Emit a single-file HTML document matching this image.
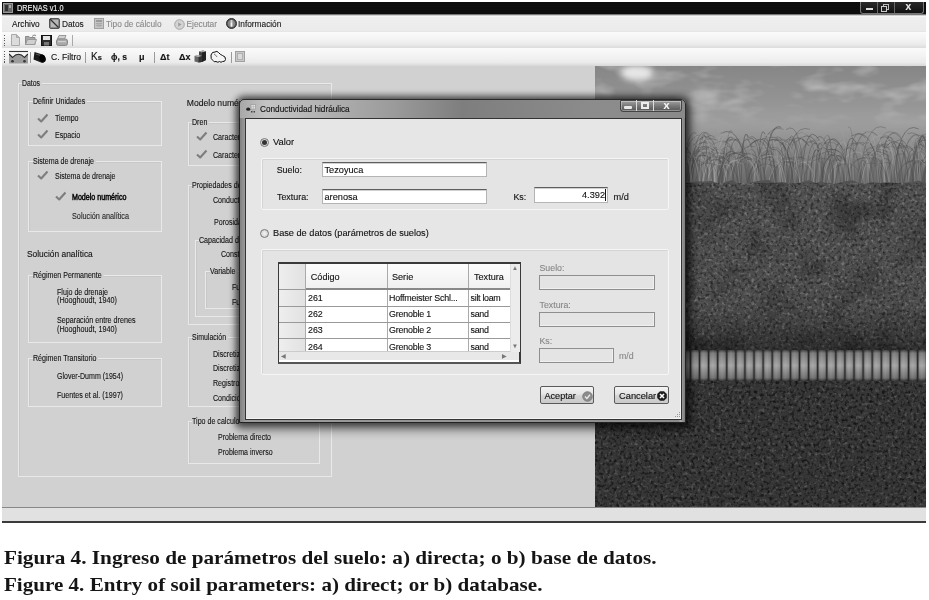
<!DOCTYPE html><html><head><meta charset="utf-8"><style>
html,body{margin:0;padding:0;background:#fff;width:929px;height:600px;overflow:hidden;position:relative}
body{filter:grayscale(1);-webkit-font-smoothing:antialiased}
.t{position:absolute;white-space:nowrap;line-height:1;font-family:"Liberation Sans",sans-serif;-webkit-text-stroke:0.12px currentColor}
.cap{-webkit-text-stroke:0}
div{box-sizing:border-box}
</style></head><body>
<div style="position:absolute;left:2px;top:2px;width:924px;height:12px;background:#0d0d0d"></div>
<svg style="position:absolute;left:3px;top:3px" width="10" height="10"><rect x="0.5" y="0.5" width="9" height="9" fill="#6a6a6a" stroke="#999"/><rect x="2" y="2" width="3" height="6" fill="#333"/><rect x="6" y="2" width="2" height="3" fill="#aaa"/></svg>
<div class="t" style="left:16.6px;top:4.3px;font-size:8.6px;color:#f2f2f2;font-weight:normal;font-family:'Liberation Sans',sans-serif;transform:scaleX(0.855);transform-origin:0 0;">DRENAS v1.0</div>
<div style="position:absolute;left:860px;top:2px;width:64px;height:12px;background:linear-gradient(#2a2a2a,#111);border:1px solid #777;border-top:none;border-radius:0 0 3px 3px"></div>
<div style="position:absolute;left:877px;top:2px;width:1px;height:11px;background:#666"></div>
<div style="position:absolute;left:894px;top:2px;width:1px;height:11px;background:#666"></div>
<div style="position:absolute;left:866px;top:7.5px;width:7px;height:2.5px;background:#ddd"></div>
<div style="position:absolute;left:883px;top:3.5px;width:6px;height:6px;border:1px solid #bbb"></div>
<div style="position:absolute;left:881px;top:5.5px;width:6px;height:6px;border:1px solid #ccc;background:#222"></div>
<div class="t" style="left:905.5px;top:3.3px;font-size:8.5px;color:#f0f0f0;font-weight:bold;font-family:'Liberation Sans',sans-serif;">X</div>
<div style="position:absolute;left:2px;top:14px;width:924px;height:18px;background:linear-gradient(#4a4a4a,#fafafa 11%,#eeeeee 20%,#ebebeb 90%,#e4e4e4)"></div>
<div class="t" style="left:12.0px;top:19.5px;font-size:8.3px;color:#111;font-weight:normal;font-family:'Liberation Sans',sans-serif;">Archivo</div>
<svg style="position:absolute;left:49px;top:18px" width="11" height="11"><rect x="0.5" y="0.5" width="10" height="10" rx="1.5" fill="#8a8a8a" stroke="#555"/><rect x="2" y="2" width="7" height="7" fill="#b8b8b8"/><line x1="1" y1="1" x2="9.5" y2="9.5" stroke="#333" stroke-width="1.3"/></svg>
<div class="t" style="left:62.0px;top:19.5px;font-size:8.3px;color:#1a1a1a;font-weight:normal;font-family:'Liberation Sans',sans-serif;">Datos</div>
<svg style="position:absolute;left:94px;top:18px" width="10" height="11"><rect x="0.5" y="0.5" width="9" height="10" fill="#c4c4c4" stroke="#a0a0a0"/><rect x="2" y="2" width="6" height="2" fill="#9a9a9a"/><path d="M2 5.5h6M2 7.5h6M4 5v4M6 5v4" stroke="#a8a8a8"/></svg>
<div class="t" style="left:106.0px;top:19.5px;font-size:8.3px;color:#8a8a8a;font-weight:normal;font-family:'Liberation Sans',sans-serif;">Tipo de cálculo</div>
<svg style="position:absolute;left:174px;top:18.5px" width="11" height="11"><circle cx="5.5" cy="5.5" r="4.8" fill="#d4d4d4" stroke="#a4a4a4"/><path d="M4.2 3.2 L7.6 5.5 L4.2 7.8Z" fill="#a0a0a0"/></svg>
<div class="t" style="left:186.5px;top:19.5px;font-size:8.3px;color:#8a8a8a;font-weight:normal;font-family:'Liberation Sans',sans-serif;">Ejecutar</div>
<svg style="position:absolute;left:226px;top:18px" width="11" height="11"><circle cx="5.5" cy="5.5" r="5" fill="#555" stroke="#333"/><circle cx="5.5" cy="5.5" r="3.6" fill="#8a8a8a"/><rect x="4.6" y="4.2" width="1.8" height="4.5" fill="#f4f4f4"/><rect x="4.6" y="2.3" width="1.8" height="1.4" fill="#f4f4f4"/></svg>
<div class="t" style="left:238.0px;top:19.5px;font-size:8.3px;color:#1a1a1a;font-weight:normal;font-family:'Liberation Sans',sans-serif;">Información</div>
<div style="position:absolute;left:2px;top:32px;width:924px;height:15.5px;background:linear-gradient(#fbfbfb,#f4f4f4 40%,#ececec 75%,#dcdcdc)"></div>
<div style="position:absolute;left:4px;top:34.5px;width:1.2px;height:11px;background:repeating-linear-gradient(#555 0 1.2px,transparent 1.2px 2.6px)"></div>
<svg style="position:absolute;left:11px;top:34px" width="9" height="12"><path d="M0.5 0.5 H5.5 L8.5 3.5 V11.5 H0.5Z" fill="#dcdcdc" stroke="#aaa"/><path d="M5.5 0.5 V3.5 H8.5" fill="#bbb" stroke="#aaa"/></svg>
<svg style="position:absolute;left:25px;top:34px" width="12" height="11"><path d="M0.5 2.5 H4 L5 3.5 H10 V10.5 H0.5Z" fill="#a8a8a8" stroke="#8a8a8a"/><path d="M0.5 10.5 L2.5 5.5 H11.5 L9.5 10.5Z" fill="#cfcfcf" stroke="#999"/><path d="M7 2.5 Q9 0 11 1.5" fill="none" stroke="#888"/></svg>
<svg style="position:absolute;left:41px;top:35px" width="11" height="11"><rect x="0.5" y="0.5" width="10" height="10" fill="#2c2c2c" stroke="#111"/><rect x="2" y="1" width="7" height="4" fill="#e4e4e4"/><rect x="3" y="7" width="5" height="3.5" fill="#777"/></svg>
<svg style="position:absolute;left:56px;top:35px" width="12" height="11"><path d="M3 0.5 H10 L8.5 4 H1.5Z" fill="#d0d0d0" stroke="#999"/><rect x="0.5" y="4" width="11" height="6.5" rx="2" fill="#a8a8a8" stroke="#8a8a8a"/><rect x="2" y="6" width="8" height="1.2" fill="#cfcfcf"/></svg>
<div style="position:absolute;left:72px;top:35px;width:1px;height:11px;background:#aaa"></div>
<div style="position:absolute;left:2px;top:47.5px;width:924px;height:18.5px;background:linear-gradient(#fafafa,#f4f4f4 40%,#ebebeb 80%,#d8d8d8)"></div>
<div style="position:absolute;left:4px;top:50.5px;width:1.2px;height:12px;background:repeating-linear-gradient(#555 0 1.2px,transparent 1.2px 2.6px)"></div>
<svg style="position:absolute;left:9px;top:50px" width="19" height="14"><line x1="0" y1="1.5" x2="19" y2="1.5" stroke="#333" stroke-width="1.1"/><path d="M0 4 L3.5 7.5 Q9.5 1 15.5 7.5 L19 4 V13.5 H0Z" fill="#9c9c9c"/><path d="M0 4 L3.5 7.5 Q9.5 1 15.5 7.5 L19 4" fill="none" stroke="#222" stroke-width="1.1"/><circle cx="3.5" cy="11.2" r="1.3" fill="#333"/><circle cx="15.5" cy="11.2" r="1.3" fill="#333"/></svg>
<div style="position:absolute;left:30px;top:51.5px;width:1px;height:11px;background:#9a9a9a"></div>
<svg style="position:absolute;left:33px;top:51px" width="14" height="12"><path d="M1.5 1 L9.5 3.5 A3.2 4 -20 0 1 8 11.5 L0.5 8.5 Z" fill="#1a1a1a"/><ellipse cx="9.6" cy="7.6" rx="3" ry="4" transform="rotate(-20 9.6 7.6)" fill="#000"/><path d="M3 3 L7 4.3" stroke="#666" stroke-width="0.8"/></svg>
<div class="t" style="left:51.0px;top:52.5px;font-size:8.6px;color:#111;font-weight:normal;font-family:'Liberation Sans',sans-serif;">C. Filtro</div>
<div style="position:absolute;left:85px;top:51.5px;width:1px;height:11px;background:#9a9a9a"></div>
<div class="t" style="left:91.0px;top:52.3px;font-size:10px;color:#111;font-weight:normal;font-family:'Liberation Sans',sans-serif;">K<span style='font-size:7.5px;font-weight:bold'>s</span></div>
<div class="t" style="left:111.0px;top:52.8px;font-size:9px;color:#111;font-weight:bold;font-family:'Liberation Sans',sans-serif;transform:scaleX(0.950);transform-origin:0 0;">ϕ, s</div>
<div class="t" style="left:139.0px;top:52.8px;font-size:9px;color:#111;font-weight:bold;font-family:'Liberation Sans',sans-serif;">μ</div>
<div style="position:absolute;left:154px;top:51.5px;width:1px;height:11px;background:#9a9a9a"></div>
<div class="t" style="left:160.0px;top:52.8px;font-size:9px;color:#111;font-weight:bold;font-family:'Liberation Sans',sans-serif;">Δt</div>
<div class="t" style="left:179.0px;top:52.8px;font-size:9px;color:#111;font-weight:bold;font-family:'Liberation Sans',sans-serif;">Δx</div>
<svg style="position:absolute;left:194px;top:50px" width="13" height="13"><path d="M5 1.5 L9 0.5 L12 1.5 V10 L8 12 L5 11Z" fill="#444"/><path d="M5 1.5 L9 0.5 L12 1.5 L8 2.5Z" fill="#aaa"/><path d="M8 2.5 V12 L12 10 V1.5Z" fill="#222"/><path d="M0.5 6 L4 5 L8 6 V12 L4.5 12.5 L0.5 11.5Z" fill="#666"/><path d="M0.5 6 L4 5 L8 6 L4.5 7Z" fill="#bbb"/><path d="M4.5 7 V12.5 L8 12V6Z" fill="#333"/></svg>
<svg style="position:absolute;left:210px;top:50px" width="17" height="14"><path d="M1 5 Q2 1.5 5 2 Q7 0.5 8.5 2.5 Q10 4.5 12.5 5.5 Q16 6.5 15.5 9.5 Q15 12 12.5 11.5 Q11 13 9.5 11.5 Q8 13 6 11.5 Q4 12.5 3 10.5 Q0.5 9.5 1 5Z" fill="#f4f4f4" stroke="#111" stroke-width="1"/><path d="M4 4 Q6 5 7 7" fill="none" stroke="#444" stroke-width="0.7"/></svg>
<div style="position:absolute;left:231px;top:51.5px;width:1px;height:11px;background:#9a9a9a"></div>
<svg style="position:absolute;left:235px;top:51px" width="10" height="11"><rect x="0.5" y="0.5" width="9" height="10" fill="#c8c8c8" stroke="#a0a0a0"/><rect x="2.5" y="2.5" width="5" height="6" fill="#dadada" stroke="#b0b0b0"/></svg>
<div style="position:absolute;left:2px;top:66px;width:924px;height:441px;background:#d1d1d1"></div>
<div style="position:absolute;left:2px;top:507px;width:924px;height:1px;background:#888"></div>
<div style="position:absolute;left:2px;top:508px;width:924px;height:13px;background:#e1e1e1"></div>
<div style="position:absolute;left:2px;top:521px;width:924px;height:2px;background:#3a3a3a"></div>
<div style="position:absolute;left:595px;top:66px;width:331px;height:441px;overflow:hidden;background:#4a4a4a">
<svg width="331" height="441" style="position:absolute;left:0;top:0">
<defs>
<filter id="noise" x="0" y="0" width="100%" height="100%"><feTurbulence type="fractalNoise" baseFrequency="0.32" numOctaves="2" seed="3"/><feColorMatrix type="matrix" values="0 0 0 0 0  0 0 0 0 0  0 0 0 0 0  0 0 0 -3.0 1.6"/></filter>
<filter id="noisew" x="0" y="0" width="100%" height="100%"><feTurbulence type="fractalNoise" baseFrequency="0.3" numOctaves="2" seed="11"/><feColorMatrix type="matrix" values="0 0 0 0 1  0 0 0 0 1  0 0 0 0 1  0 0 0 3.0 -1.6"/></filter>
<filter id="blotch" x="0" y="0" width="100%" height="100%"><feTurbulence type="fractalNoise" baseFrequency="0.03" numOctaves="2" seed="21"/><feColorMatrix type="matrix" values="0 0 0 0 0  0 0 0 0 0  0 0 0 0 0  0 0 0 -3 1.6"/></filter>
<filter id="cloud" x="0" y="0" width="100%" height="100%"><feTurbulence type="fractalNoise" baseFrequency="0.025 0.06" numOctaves="3" seed="7"/><feColorMatrix type="matrix" values="0 0 0 0 1  0 0 0 0 1  0 0 0 0 1  0 0 0 2.0 -0.95"/></filter>
<filter id="blur3" x="-50%" y="-50%" width="200%" height="200%"><feGaussianBlur stdDeviation="3"/></filter>
<linearGradient id="sky" x1="0" y1="0" x2="0" y2="1"><stop offset="0" stop-color="#868686"/><stop offset="1" stop-color="#a2a2a2"/></linearGradient>
<linearGradient id="grassbg" x1="0" y1="0" x2="0" y2="1"><stop offset="0" stop-color="#a0a0a0" stop-opacity="0"/><stop offset="0.3" stop-color="#9a9a9a"/><stop offset="0.65" stop-color="#808080"/><stop offset="1" stop-color="#666"/></linearGradient>
<linearGradient id="soil" x1="0" y1="0" x2="0" y2="1"><stop offset="0" stop-color="#525252"/><stop offset="1" stop-color="#4c4c4c"/></linearGradient>
<linearGradient id="soilshade" x1="0" y1="0" x2="0" y2="1"><stop offset="0" stop-color="#000" stop-opacity="0"/><stop offset="1" stop-color="#000" stop-opacity="0.35"/></linearGradient>
<linearGradient id="pipe" x1="0" y1="0" x2="0" y2="1"><stop offset="0" stop-color="#3a3a3a"/><stop offset="0.1" stop-color="#7a7a7a"/><stop offset="0.5" stop-color="#a4a4a4"/><stop offset="0.9" stop-color="#707070"/><stop offset="1" stop-color="#303030"/></linearGradient>
<linearGradient id="ribh" x1="0" y1="0" x2="1" y2="0"><stop offset="0" stop-color="#000" stop-opacity="0.45"/><stop offset="0.18" stop-color="#000" stop-opacity="0.05"/><stop offset="0.5" stop-color="#fff" stop-opacity="0.08"/><stop offset="0.85" stop-color="#000" stop-opacity="0.05"/><stop offset="1" stop-color="#000" stop-opacity="0.45"/></linearGradient>
<pattern id="ribs" x="4.0" y="284" width="9.09" height="31" patternUnits="userSpaceOnUse"><rect width="9.09" height="31" fill="url(#pipe)"/><rect width="9.09" height="31" fill="url(#ribh)"/><rect x="0" width="1.3" height="31" fill="#262626"/></pattern>
</defs>
<rect x="0" y="0" width="331" height="70" fill="url(#sky)"/>
<rect x="0" y="0" width="331" height="70" filter="url(#cloud)" opacity="0.4"/>
<ellipse cx="42" cy="7" rx="16" ry="8" fill="#f0f0f0" filter="url(#blur3)" opacity="0.9"/>
<ellipse cx="110" cy="30" rx="14" ry="6" fill="#c8c8c8" filter="url(#blur3)" opacity="0.6"/>
<rect x="0" y="40" width="331" height="80" fill="url(#grassbg)"/>
<rect x="0" y="0" width="331" height="60" fill="url(#sky)" opacity="0"/>
<g fill="none">
<path d="M208.0 121 Q203.0 58.9 182.9 84.4" stroke="#a0a0a0" stroke-width="0.99" opacity="0.44"/>
<path d="M44.9 121 Q50.3 75.2 71.7 91.5" stroke="#505050" stroke-width="0.89" opacity="0.35"/>
<path d="M87.8 121 Q82.9 51.2 63.4 70.8" stroke="#a0a0a0" stroke-width="0.64" opacity="0.57"/>
<path d="M36.3 121 Q35.1 48.7 30.2 72.1" stroke="#a0a0a0" stroke-width="0.68" opacity="0.41"/>
<path d="M59.6 121 Q55.4 53.0 38.6 61.9" stroke="#a0a0a0" stroke-width="0.95" opacity="0.69"/>
<path d="M94.6 121 Q92.6 75.7 84.6 86.2" stroke="#505050" stroke-width="0.77" opacity="0.64"/>
<path d="M198.6 121 Q200.1 60.4 206.2 76.6" stroke="#a0a0a0" stroke-width="0.84" opacity="0.46"/>
<path d="M236.6 121 Q230.8 89.1 207.2 96.9" stroke="#a0a0a0" stroke-width="0.78" opacity="0.49"/>
<path d="M136.6 121 Q141.8 75.0 162.8 91.7" stroke="#505050" stroke-width="0.69" opacity="0.68"/>
<path d="M254.5 121 Q260.2 50.6 283.1 69.9" stroke="#505050" stroke-width="1.05" opacity="0.44"/>
<path d="M196.4 121 Q199.4 57.2 211.2 77.3" stroke="#505050" stroke-width="1.07" opacity="0.38"/>
<path d="M203.8 121 Q201.0 51.1 189.6 79.2" stroke="#505050" stroke-width="0.76" opacity="0.41"/>
<path d="M42.1 121 Q36.1 61.2 12.2 68.4" stroke="#a0a0a0" stroke-width="0.64" opacity="0.56"/>
<path d="M1.1 121 Q4.0 58.9 15.4 66.6" stroke="#505050" stroke-width="0.81" opacity="0.37"/>
<path d="M1.5 121 Q-3.8 69.8 -24.7 76.5" stroke="#a0a0a0" stroke-width="0.88" opacity="0.40"/>
<path d="M134.8 121 Q131.8 84.2 119.9 87.7" stroke="#a0a0a0" stroke-width="0.75" opacity="0.51"/>
<path d="M288.3 121 Q291.7 48.6 305.2 68.3" stroke="#a0a0a0" stroke-width="0.76" opacity="0.45"/>
<path d="M305.7 121 Q300.5 86.6 279.9 100.3" stroke="#505050" stroke-width="0.85" opacity="0.47"/>
<path d="M85.3 121 Q90.7 57.1 112.1 72.0" stroke="#505050" stroke-width="1.00" opacity="0.47"/>
<path d="M2.0 121 Q5.9 78.1 21.4 86.3" stroke="#a0a0a0" stroke-width="0.73" opacity="0.69"/>
<path d="M324.9 121 Q322.9 76.6 314.6 91.6" stroke="#505050" stroke-width="0.99" opacity="0.46"/>
<path d="M91.1 121 Q95.5 69.5 113.3 77.4" stroke="#505050" stroke-width="0.92" opacity="0.61"/>
<path d="M112.5 121 Q117.9 54.4 139.4 71.2" stroke="#a0a0a0" stroke-width="1.08" opacity="0.53"/>
<path d="M48.2 121 Q53.9 54.7 76.7 73.9" stroke="#505050" stroke-width="0.64" opacity="0.58"/>
<path d="M205.9 121 Q209.6 50.3 224.3 74.2" stroke="#505050" stroke-width="0.88" opacity="0.65"/>
<path d="M338.6 121 Q334.6 83.0 318.5 98.7" stroke="#505050" stroke-width="0.94" opacity="0.57"/>
<path d="M155.1 121 Q153.6 81.6 147.8 91.3" stroke="#505050" stroke-width="1.08" opacity="0.52"/>
<path d="M135.4 121 Q131.0 76.1 113.5 95.3" stroke="#505050" stroke-width="0.72" opacity="0.67"/>
<path d="M131.9 121 Q128.7 79.3 116.0 89.5" stroke="#a0a0a0" stroke-width="0.87" opacity="0.69"/>
<path d="M95.5 121 Q99.1 78.6 113.8 85.3" stroke="#a0a0a0" stroke-width="1.01" opacity="0.50"/>
<path d="M214.8 121 Q216.7 75.3 224.2 85.6" stroke="#505050" stroke-width="1.08" opacity="0.69"/>
<path d="M112.9 121 Q111.7 52.2 106.9 74.2" stroke="#505050" stroke-width="1.06" opacity="0.54"/>
<path d="M296.8 121 Q293.5 66.7 280.5 83.0" stroke="#505050" stroke-width="0.84" opacity="0.60"/>
<path d="M289.2 121 Q293.3 84.6 309.5 88.2" stroke="#505050" stroke-width="0.81" opacity="0.46"/>
<path d="M162.1 121 Q158.6 79.0 144.7 96.4" stroke="#505050" stroke-width="1.08" opacity="0.44"/>
<path d="M37.8 121 Q41.3 74.3 55.3 86.7" stroke="#505050" stroke-width="0.84" opacity="0.36"/>
<path d="M285.4 121 Q287.9 59.8 298.2 73.7" stroke="#505050" stroke-width="0.84" opacity="0.58"/>
<path d="M250.2 121 Q255.1 86.4 274.5 92.8" stroke="#505050" stroke-width="0.95" opacity="0.56"/>
<path d="M-0.7 121 Q-5.2 76.2 -23.0 81.7" stroke="#505050" stroke-width="0.73" opacity="0.51"/>
<path d="M300.8 121 Q302.0 67.5 307.1 78.9" stroke="#505050" stroke-width="0.94" opacity="0.68"/>
<path d="M290.5 121 Q287.1 54.5 273.1 76.3" stroke="#a0a0a0" stroke-width="0.83" opacity="0.62"/>
<path d="M-8.9 121 Q-4.9 57.2 11.1 72.9" stroke="#a0a0a0" stroke-width="0.67" opacity="0.52"/>
<path d="M164.2 121 Q162.3 77.0 154.5 84.3" stroke="#505050" stroke-width="0.72" opacity="0.64"/>
<path d="M222.3 121 Q217.6 90.5 198.9 95.0" stroke="#a0a0a0" stroke-width="0.95" opacity="0.37"/>
<path d="M66.7 121 Q61.0 63.1 37.9 84.4" stroke="#a0a0a0" stroke-width="0.95" opacity="0.50"/>
<path d="M54.9 121 Q53.3 56.2 47.2 82.4" stroke="#505050" stroke-width="0.65" opacity="0.48"/>
<path d="M10.1 121 Q5.4 66.2 -13.7 80.8" stroke="#505050" stroke-width="0.65" opacity="0.59"/>
<path d="M113.7 121 Q108.1 62.7 85.7 77.8" stroke="#a0a0a0" stroke-width="0.68" opacity="0.57"/>
<path d="M308.6 121 Q312.8 67.1 329.5 85.1" stroke="#505050" stroke-width="0.72" opacity="0.64"/>
<path d="M331.3 121 Q336.6 56.0 358.0 69.6" stroke="#a0a0a0" stroke-width="0.69" opacity="0.60"/>
<path d="M19.8 121 Q18.2 62.1 11.6 78.3" stroke="#505050" stroke-width="0.83" opacity="0.49"/>
<path d="M327.2 121 Q330.9 86.9 345.9 93.7" stroke="#505050" stroke-width="0.68" opacity="0.68"/>
<path d="M68.1 121 Q73.9 86.5 97.4 97.2" stroke="#a0a0a0" stroke-width="0.67" opacity="0.57"/>
<path d="M72.3 121 Q76.4 76.9 93.0 90.5" stroke="#a0a0a0" stroke-width="0.79" opacity="0.60"/>
<path d="M93.6 121 Q99.4 63.8 122.6 74.2" stroke="#505050" stroke-width="0.90" opacity="0.55"/>
<path d="M128.4 121 Q127.1 87.3 121.6 94.3" stroke="#505050" stroke-width="0.85" opacity="0.68"/>
<path d="M112.0 121 Q114.6 72.8 125.2 82.9" stroke="#505050" stroke-width="0.83" opacity="0.42"/>
<path d="M14.9 121 Q20.3 53.3 41.8 78.7" stroke="#505050" stroke-width="0.73" opacity="0.45"/>
<path d="M90.5 121 Q87.0 81.2 72.9 97.5" stroke="#505050" stroke-width="0.98" opacity="0.46"/>
<path d="M-2.4 121 Q-7.7 71.5 -28.8 81.6" stroke="#505050" stroke-width="0.93" opacity="0.45"/>
<path d="M245.3 121 Q243.1 84.4 234.4 89.0" stroke="#505050" stroke-width="0.93" opacity="0.57"/>
<path d="M237.3 121 Q239.4 61.6 247.8 83.8" stroke="#505050" stroke-width="0.97" opacity="0.60"/>
<path d="M74.2 121 Q79.9 62.0 102.8 78.3" stroke="#a0a0a0" stroke-width="0.74" opacity="0.51"/>
<path d="M228.5 121 Q229.8 84.1 235.3 90.0" stroke="#a0a0a0" stroke-width="0.96" opacity="0.43"/>
<path d="M22.2 121 Q17.7 70.8 -0.2 78.4" stroke="#505050" stroke-width="0.99" opacity="0.37"/>
<path d="M146.1 121 Q140.7 63.4 119.1 77.9" stroke="#505050" stroke-width="0.85" opacity="0.49"/>
<path d="M19.5 121 Q17.8 77.8 10.9 96.0" stroke="#505050" stroke-width="1.03" opacity="0.43"/>
<path d="M178.9 121 Q182.8 70.1 198.6 79.1" stroke="#505050" stroke-width="0.67" opacity="0.35"/>
<path d="M231.0 121 Q225.0 52.3 201.0 75.7" stroke="#505050" stroke-width="0.84" opacity="0.62"/>
<path d="M130.9 121 Q134.7 85.7 149.8 94.1" stroke="#505050" stroke-width="0.64" opacity="0.50"/>
<path d="M75.9 121 Q71.3 88.9 53.1 93.2" stroke="#a0a0a0" stroke-width="1.00" opacity="0.66"/>
<path d="M15.2 121 Q12.1 57.7 0.0 72.7" stroke="#a0a0a0" stroke-width="0.93" opacity="0.62"/>
<path d="M144.8 121 Q140.4 55.6 123.0 65.9" stroke="#a0a0a0" stroke-width="0.95" opacity="0.44"/>
<path d="M123.8 121 Q122.3 85.9 116.3 100.5" stroke="#505050" stroke-width="0.85" opacity="0.46"/>
<path d="M179.8 121 Q178.5 59.0 173.2 67.8" stroke="#505050" stroke-width="0.67" opacity="0.48"/>
<path d="M322.2 121 Q324.5 64.6 333.8 85.7" stroke="#505050" stroke-width="0.70" opacity="0.48"/>
<path d="M206.7 121 Q212.6 84.4 236.3 94.6" stroke="#505050" stroke-width="0.69" opacity="0.60"/>
<path d="M318.5 121 Q320.3 56.6 327.3 80.5" stroke="#505050" stroke-width="0.71" opacity="0.56"/>
<path d="M7.0 121 Q8.9 62.1 16.8 71.4" stroke="#a0a0a0" stroke-width="0.90" opacity="0.39"/>
<path d="M136.8 121 Q130.9 89.3 107.3 99.1" stroke="#a0a0a0" stroke-width="0.72" opacity="0.60"/>
<path d="M152.5 121 Q157.6 82.7 178.2 96.0" stroke="#505050" stroke-width="0.78" opacity="0.61"/>
<path d="M113.1 121 Q107.2 80.7 83.5 86.8" stroke="#505050" stroke-width="0.80" opacity="0.40"/>
<path d="M161.5 121 Q159.5 89.9 151.5 95.0" stroke="#a0a0a0" stroke-width="0.74" opacity="0.67"/>
<path d="M254.3 121 Q250.8 70.6 237.0 83.6" stroke="#a0a0a0" stroke-width="0.79" opacity="0.35"/>
<path d="M195.3 121 Q198.4 83.5 210.7 93.3" stroke="#505050" stroke-width="0.91" opacity="0.53"/>
<path d="M181.0 121 Q177.6 61.1 164.2 75.0" stroke="#505050" stroke-width="1.00" opacity="0.48"/>
<path d="M227.8 121 Q225.2 68.6 215.0 76.0" stroke="#505050" stroke-width="0.99" opacity="0.56"/>
<path d="M319.3 121 Q313.5 73.4 290.1 81.8" stroke="#505050" stroke-width="0.96" opacity="0.38"/>
<path d="M224.5 121 Q219.0 49.4 196.9 71.9" stroke="#505050" stroke-width="0.65" opacity="0.39"/>
<path d="M265.0 121 Q270.8 72.9 294.2 90.2" stroke="#505050" stroke-width="0.98" opacity="0.53"/>
<path d="M227.1 121 Q229.8 77.4 240.9 84.5" stroke="#505050" stroke-width="0.65" opacity="0.45"/>
<path d="M269.0 121 Q263.2 88.2 240.2 101.5" stroke="#505050" stroke-width="0.98" opacity="0.43"/>
<path d="M188.1 121 Q193.5 55.0 215.1 63.4" stroke="#505050" stroke-width="0.81" opacity="0.54"/>
<path d="M95.8 121 Q99.9 79.2 116.3 89.3" stroke="#505050" stroke-width="0.62" opacity="0.39"/>
<path d="M201.2 121 Q199.1 83.5 190.6 98.8" stroke="#505050" stroke-width="0.95" opacity="0.61"/>
<path d="M159.6 121 Q165.4 54.8 188.6 63.3" stroke="#505050" stroke-width="0.83" opacity="0.48"/>
<path d="M302.7 121 Q297.7 64.5 277.6 82.4" stroke="#505050" stroke-width="0.94" opacity="0.39"/>
<path d="M118.7 121 Q122.7 58.1 138.5 70.1" stroke="#a0a0a0" stroke-width="1.01" opacity="0.63"/>
<path d="M313.4 121 Q309.2 49.4 292.4 72.3" stroke="#505050" stroke-width="1.01" opacity="0.42"/>
<path d="M50.5 121 Q44.6 52.3 20.8 81.6" stroke="#505050" stroke-width="1.07" opacity="0.51"/>
<path d="M333.1 121 Q331.3 49.2 323.9 78.2" stroke="#505050" stroke-width="1.08" opacity="0.68"/>
<path d="M255.9 121 Q253.3 59.8 242.8 82.0" stroke="#a0a0a0" stroke-width="1.10" opacity="0.61"/>
<path d="M110.3 121 Q104.7 85.4 82.5 90.6" stroke="#505050" stroke-width="0.75" opacity="0.47"/>
<path d="M171.7 121 Q168.5 89.4 155.6 92.7" stroke="#505050" stroke-width="0.96" opacity="0.40"/>
<path d="M183.7 121 Q185.7 72.5 194.0 91.2" stroke="#a0a0a0" stroke-width="0.72" opacity="0.51"/>
<path d="M19.3 121 Q17.4 55.5 9.9 64.6" stroke="#505050" stroke-width="0.88" opacity="0.68"/>
<path d="M17.4 121 Q19.6 48.8 28.1 65.3" stroke="#505050" stroke-width="0.86" opacity="0.68"/>
<path d="M283.7 121 Q282.4 70.9 277.2 82.4" stroke="#505050" stroke-width="0.99" opacity="0.50"/>
<path d="M305.8 121 Q301.6 63.1 284.6 72.3" stroke="#505050" stroke-width="0.81" opacity="0.60"/>
<path d="M278.3 121 Q272.8 72.5 250.7 90.9" stroke="#a0a0a0" stroke-width="0.98" opacity="0.66"/>
<path d="M263.3 121 Q269.2 73.0 292.7 86.0" stroke="#505050" stroke-width="0.81" opacity="0.44"/>
<path d="M90.3 121 Q88.5 62.2 81.3 86.7" stroke="#a0a0a0" stroke-width="0.64" opacity="0.59"/>
<path d="M133.3 121 Q137.7 85.0 154.9 97.6" stroke="#a0a0a0" stroke-width="0.90" opacity="0.40"/>
<path d="M312.1 121 Q310.7 50.3 305.3 65.2" stroke="#a0a0a0" stroke-width="0.64" opacity="0.40"/>
<path d="M106.9 121 Q104.3 82.1 93.9 94.9" stroke="#505050" stroke-width="0.65" opacity="0.49"/>
<path d="M307.3 121 Q303.9 67.5 290.6 90.2" stroke="#a0a0a0" stroke-width="0.67" opacity="0.36"/>
<path d="M124.8 121 Q120.4 81.1 102.9 91.5" stroke="#505050" stroke-width="0.99" opacity="0.50"/>
<path d="M203.7 121 Q202.2 56.6 196.3 83.8" stroke="#505050" stroke-width="0.79" opacity="0.47"/>
<path d="M94.2 121 Q98.6 71.8 115.9 83.1" stroke="#505050" stroke-width="0.74" opacity="0.55"/>
<path d="M126.7 121 Q121.4 74.9 100.4 85.2" stroke="#505050" stroke-width="0.63" opacity="0.42"/>
<path d="M24.5 121 Q29.6 69.0 50.1 82.7" stroke="#a0a0a0" stroke-width="0.67" opacity="0.47"/>
<path d="M188.1 121 Q184.7 82.5 171.2 94.2" stroke="#a0a0a0" stroke-width="0.66" opacity="0.66"/>
<path d="M109.3 121 Q105.8 55.7 91.7 70.0" stroke="#a0a0a0" stroke-width="0.73" opacity="0.64"/>
<path d="M126.0 121 Q128.4 63.9 137.9 72.4" stroke="#505050" stroke-width="1.04" opacity="0.67"/>
<path d="M197.9 121 Q203.4 66.7 225.5 75.0" stroke="#505050" stroke-width="0.60" opacity="0.37"/>
<path d="M163.0 121 Q164.4 53.2 170.0 68.4" stroke="#505050" stroke-width="0.96" opacity="0.56"/>
<path d="M67.5 121 Q65.8 49.7 58.9 63.3" stroke="#a0a0a0" stroke-width="0.90" opacity="0.36"/>
<path d="M96.3 121 Q92.5 68.5 77.4 83.9" stroke="#a0a0a0" stroke-width="0.94" opacity="0.45"/>
<path d="M96.9 121 Q99.5 71.6 110.0 90.2" stroke="#505050" stroke-width="1.05" opacity="0.51"/>
<path d="M65.7 121 Q60.0 80.0 37.0 88.8" stroke="#505050" stroke-width="0.68" opacity="0.70"/>
<path d="M143.2 121 Q140.1 68.7 127.7 83.4" stroke="#505050" stroke-width="0.85" opacity="0.59"/>
<path d="M190.6 121 Q192.5 51.4 200.1 76.2" stroke="#505050" stroke-width="0.85" opacity="0.68"/>
<path d="M73.9 121 Q77.8 84.2 93.2 96.8" stroke="#a0a0a0" stroke-width="0.75" opacity="0.39"/>
<path d="M115.1 121 Q112.7 52.4 102.8 74.1" stroke="#a0a0a0" stroke-width="0.66" opacity="0.62"/>
<path d="M26.0 121 Q20.8 63.7 -0.2 76.1" stroke="#505050" stroke-width="1.09" opacity="0.48"/>
<path d="M243.4 121 Q246.6 80.1 259.2 93.0" stroke="#a0a0a0" stroke-width="0.76" opacity="0.45"/>
<path d="M339.6 121 Q338.1 73.6 332.0 79.7" stroke="#505050" stroke-width="1.07" opacity="0.63"/>
<path d="M167.2 121 Q164.0 87.0 151.2 94.2" stroke="#505050" stroke-width="1.07" opacity="0.54"/>
<path d="M228.6 121 Q225.6 77.3 213.9 94.4" stroke="#505050" stroke-width="0.65" opacity="0.62"/>
<path d="M178.1 121 Q184.0 87.9 207.8 91.4" stroke="#505050" stroke-width="0.74" opacity="0.54"/>
<path d="M139.8 121 Q136.1 82.4 121.4 94.7" stroke="#505050" stroke-width="0.92" opacity="0.67"/>
<path d="M273.8 121 Q271.9 68.3 264.5 81.2" stroke="#a0a0a0" stroke-width="0.92" opacity="0.46"/>
<path d="M269.3 121 Q266.8 63.6 257.1 73.7" stroke="#a0a0a0" stroke-width="0.73" opacity="0.51"/>
<path d="M201.7 121 Q199.5 85.7 190.8 93.3" stroke="#505050" stroke-width="0.72" opacity="0.44"/>
<path d="M241.8 121 Q238.3 80.3 224.6 85.7" stroke="#a0a0a0" stroke-width="0.84" opacity="0.45"/>
<path d="M209.7 121 Q205.9 60.8 190.7 77.0" stroke="#505050" stroke-width="0.61" opacity="0.55"/>
<path d="M284.8 121 Q288.5 53.0 303.4 70.3" stroke="#505050" stroke-width="0.63" opacity="0.45"/>
<path d="M93.0 121 Q97.9 75.3 117.5 94.8" stroke="#505050" stroke-width="0.98" opacity="0.60"/>
<path d="M320.3 121 Q325.6 77.8 346.8 91.4" stroke="#505050" stroke-width="1.02" opacity="0.59"/>
<path d="M246.1 121 Q241.5 69.3 223.1 77.8" stroke="#505050" stroke-width="0.85" opacity="0.35"/>
<path d="M260.0 121 Q258.6 54.7 253.0 61.6" stroke="#505050" stroke-width="0.66" opacity="0.42"/>
<path d="M288.4 121 Q283.2 81.1 262.5 94.6" stroke="#505050" stroke-width="0.92" opacity="0.43"/>
<path d="M-6.5 121 Q-2.5 62.6 13.5 80.4" stroke="#505050" stroke-width="0.75" opacity="0.61"/>
<path d="M198.9 121 Q195.5 58.2 182.2 76.2" stroke="#a0a0a0" stroke-width="0.87" opacity="0.35"/>
<path d="M152.2 121 Q150.1 83.2 141.7 93.4" stroke="#505050" stroke-width="0.82" opacity="0.63"/>
<path d="M172.6 121 Q177.6 90.5 197.7 94.9" stroke="#a0a0a0" stroke-width="0.91" opacity="0.60"/>
<path d="M206.1 121 Q200.6 90.7 178.8 98.3" stroke="#a0a0a0" stroke-width="0.95" opacity="0.42"/>
<path d="M300.7 121 Q297.6 84.0 285.2 95.1" stroke="#505050" stroke-width="0.75" opacity="0.61"/>
<path d="M48.1 121 Q42.6 49.6 20.6 70.4" stroke="#505050" stroke-width="0.80" opacity="0.51"/>
<path d="M-0.8 121 Q4.1 71.5 23.6 79.6" stroke="#a0a0a0" stroke-width="1.04" opacity="0.67"/>
<path d="M135.6 121 Q140.0 62.5 157.4 73.6" stroke="#a0a0a0" stroke-width="0.70" opacity="0.55"/>
<path d="M293.4 121 Q288.3 89.6 267.7 99.2" stroke="#505050" stroke-width="0.65" opacity="0.56"/>
<path d="M40.4 121 Q39.1 78.9 34.2 87.1" stroke="#a0a0a0" stroke-width="1.07" opacity="0.61"/>
<path d="M153.3 121 Q147.8 55.1 125.8 67.4" stroke="#505050" stroke-width="0.78" opacity="0.70"/>
<path d="M119.4 121 Q121.8 52.5 131.7 72.5" stroke="#a0a0a0" stroke-width="0.76" opacity="0.69"/>
<path d="M127.6 121 Q121.7 67.0 98.2 88.8" stroke="#505050" stroke-width="0.75" opacity="0.64"/>
<path d="M177.9 121 Q182.3 81.9 199.9 94.5" stroke="#505050" stroke-width="0.97" opacity="0.49"/>
<path d="M289.8 121 Q287.1 57.3 276.4 66.1" stroke="#a0a0a0" stroke-width="1.05" opacity="0.62"/>
<path d="M228.5 121 Q232.1 87.8 246.2 95.2" stroke="#505050" stroke-width="0.75" opacity="0.50"/>
<path d="M190.3 121 Q194.0 48.8 208.7 70.7" stroke="#a0a0a0" stroke-width="0.89" opacity="0.38"/>
<path d="M134.8 121 Q139.0 84.6 155.8 91.9" stroke="#505050" stroke-width="0.77" opacity="0.42"/>
<path d="M151.6 121 Q156.9 87.3 178.3 91.3" stroke="#505050" stroke-width="1.08" opacity="0.60"/>
<path d="M198.2 121 Q200.9 52.4 211.7 70.2" stroke="#a0a0a0" stroke-width="0.85" opacity="0.47"/>
<path d="M286.0 121 Q282.7 66.5 269.2 87.4" stroke="#505050" stroke-width="0.80" opacity="0.50"/>
<path d="M143.7 121 Q146.3 52.8 157.0 81.8" stroke="#505050" stroke-width="1.07" opacity="0.39"/>
<path d="M40.1 121 Q36.2 78.1 20.5 92.4" stroke="#505050" stroke-width="0.64" opacity="0.57"/>
<path d="M219.8 121 Q216.4 90.1 202.8 97.5" stroke="#a0a0a0" stroke-width="0.86" opacity="0.70"/>
<path d="M128.4 121 Q125.0 71.0 111.3 82.0" stroke="#505050" stroke-width="0.84" opacity="0.46"/>
<path d="M29.0 121 Q31.9 52.6 43.8 62.3" stroke="#a0a0a0" stroke-width="1.07" opacity="0.49"/>
<path d="M338.9 121 Q343.7 85.9 362.9 100.8" stroke="#505050" stroke-width="0.69" opacity="0.69"/>
<path d="M229.2 121 Q227.1 77.7 218.6 92.1" stroke="#505050" stroke-width="0.91" opacity="0.51"/>
<path d="M2.4 121 Q-1.9 55.5 -19.4 83.0" stroke="#a0a0a0" stroke-width="1.04" opacity="0.58"/>
<path d="M29.7 121 Q31.3 67.1 38.0 89.4" stroke="#505050" stroke-width="0.68" opacity="0.68"/>
<path d="M164.8 121 Q161.1 79.5 146.2 93.0" stroke="#a0a0a0" stroke-width="1.10" opacity="0.47"/>
<path d="M118.8 121 Q114.3 90.9 96.1 94.7" stroke="#505050" stroke-width="0.95" opacity="0.39"/>
<path d="M212.0 121 Q217.5 57.5 239.5 79.0" stroke="#a0a0a0" stroke-width="0.73" opacity="0.41"/>
<path d="M12.9 121 Q17.6 83.9 36.2 96.9" stroke="#a0a0a0" stroke-width="0.98" opacity="0.51"/>
<path d="M9.3 121 Q4.5 58.7 -14.8 84.6" stroke="#505050" stroke-width="0.89" opacity="0.45"/>
<path d="M81.0 121 Q79.2 71.4 72.1 82.5" stroke="#a0a0a0" stroke-width="0.76" opacity="0.43"/>
<path d="M-7.7 121 Q-6.5 60.9 -1.6 82.3" stroke="#505050" stroke-width="0.78" opacity="0.44"/>
<path d="M284.3 121 Q280.9 65.8 267.4 79.1" stroke="#505050" stroke-width="0.70" opacity="0.67"/>
<path d="M21.2 121 Q18.2 81.2 6.0 86.0" stroke="#505050" stroke-width="0.97" opacity="0.42"/>
<path d="M31.6 121 Q36.2 65.5 54.5 84.6" stroke="#505050" stroke-width="0.82" opacity="0.46"/>
<path d="M198.9 121 Q193.8 65.6 173.7 71.9" stroke="#505050" stroke-width="0.92" opacity="0.55"/>
<path d="M337.1 121 Q335.8 91.0 330.7 101.0" stroke="#505050" stroke-width="0.93" opacity="0.46"/>
<path d="M154.6 121 Q150.3 65.1 133.2 75.2" stroke="#505050" stroke-width="0.87" opacity="0.57"/>
<path d="M203.7 121 Q198.1 54.5 175.8 79.4" stroke="#505050" stroke-width="0.62" opacity="0.44"/>
<path d="M130.1 121 Q131.6 51.5 138.0 67.3" stroke="#505050" stroke-width="0.66" opacity="0.44"/>
<path d="M320.2 121 Q323.2 56.0 335.3 75.1" stroke="#505050" stroke-width="0.80" opacity="0.69"/>
<path d="M302.0 121 Q296.3 48.1 273.5 78.3" stroke="#a0a0a0" stroke-width="1.08" opacity="0.56"/>
<path d="M166.8 121 Q164.0 62.4 152.8 74.4" stroke="#505050" stroke-width="0.91" opacity="0.56"/>
<path d="M313.9 121 Q309.3 60.4 290.9 80.6" stroke="#505050" stroke-width="0.99" opacity="0.58"/>
<path d="M333.2 121 Q329.7 73.2 315.7 86.6" stroke="#a0a0a0" stroke-width="0.83" opacity="0.68"/>
<path d="M188.3 121 Q185.5 47.9 174.5 63.3" stroke="#a0a0a0" stroke-width="0.64" opacity="0.62"/>
<path d="M178.9 121 Q173.6 56.8 152.3 81.3" stroke="#505050" stroke-width="0.95" opacity="0.59"/>
<path d="M29.2 121 Q34.0 89.5 53.4 102.8" stroke="#505050" stroke-width="0.69" opacity="0.39"/>
<path d="M266.0 121 Q271.9 72.4 295.7 85.2" stroke="#a0a0a0" stroke-width="1.09" opacity="0.52"/>
<path d="M220.1 121 Q221.5 66.8 227.3 80.1" stroke="#505050" stroke-width="1.09" opacity="0.42"/>
<path d="M78.7 121 Q76.4 48.7 67.2 57.5" stroke="#505050" stroke-width="0.63" opacity="0.52"/>
<path d="M71.7 121 Q73.9 73.3 82.9 88.8" stroke="#505050" stroke-width="0.66" opacity="0.40"/>
<path d="M258.9 121 Q256.0 50.1 244.4 74.5" stroke="#a0a0a0" stroke-width="0.65" opacity="0.55"/>
<path d="M176.0 121 Q174.6 63.8 169.0 70.6" stroke="#505050" stroke-width="0.75" opacity="0.40"/>
<path d="M67.5 121 Q69.6 77.2 77.9 92.2" stroke="#a0a0a0" stroke-width="0.81" opacity="0.35"/>
<path d="M336.1 121 Q331.3 60.0 312.4 67.7" stroke="#505050" stroke-width="0.75" opacity="0.51"/>
<path d="M307.8 121 Q313.7 85.0 337.5 100.3" stroke="#505050" stroke-width="0.82" opacity="0.69"/>
<path d="M158.0 121 Q152.0 59.0 128.2 76.9" stroke="#505050" stroke-width="0.99" opacity="0.44"/>
<path d="M26.4 121 Q32.4 81.1 56.4 91.3" stroke="#505050" stroke-width="0.94" opacity="0.59"/>
<path d="M118.4 121 Q117.0 85.1 111.6 94.9" stroke="#505050" stroke-width="0.81" opacity="0.69"/>
<path d="M186.3 121 Q191.9 52.0 214.1 80.0" stroke="#505050" stroke-width="1.03" opacity="0.52"/>
<path d="M19.8 121 Q23.8 52.3 39.7 71.1" stroke="#a0a0a0" stroke-width="0.82" opacity="0.59"/>
<path d="M8.7 121 Q6.4 84.0 -2.9 93.4" stroke="#505050" stroke-width="0.72" opacity="0.37"/>
<path d="M53.5 121 Q59.0 72.0 81.0 90.3" stroke="#505050" stroke-width="1.03" opacity="0.51"/>
<path d="M117.0 121 Q113.6 86.5 99.8 91.7" stroke="#a0a0a0" stroke-width="0.76" opacity="0.67"/>
<path d="M317.1 121 Q318.6 59.5 324.8 75.2" stroke="#505050" stroke-width="0.79" opacity="0.46"/>
<path d="M250.2 121 Q245.2 75.2 225.3 88.4" stroke="#505050" stroke-width="0.81" opacity="0.56"/>
<path d="M282.6 121 Q280.6 81.9 272.3 86.8" stroke="#505050" stroke-width="0.62" opacity="0.62"/>
<path d="M139.6 121 Q134.2 68.4 112.3 89.0" stroke="#505050" stroke-width="0.70" opacity="0.43"/>
<path d="M2.9 121 Q8.6 49.6 31.7 72.8" stroke="#505050" stroke-width="0.77" opacity="0.64"/>
<path d="M104.6 121 Q99.1 81.4 77.1 91.8" stroke="#a0a0a0" stroke-width="0.76" opacity="0.38"/>
<path d="M328.0 121 Q329.9 87.7 337.6 96.7" stroke="#505050" stroke-width="0.84" opacity="0.59"/>
<path d="M321.4 121 Q316.4 72.3 296.4 86.4" stroke="#a0a0a0" stroke-width="0.96" opacity="0.42"/>
<path d="M44.9 121 Q49.4 90.7 67.4 94.9" stroke="#a0a0a0" stroke-width="0.99" opacity="0.65"/>
<path d="M185.8 121 Q181.3 50.0 163.4 76.1" stroke="#a0a0a0" stroke-width="0.71" opacity="0.70"/>
<path d="M193.3 121 Q190.7 63.2 180.4 71.9" stroke="#505050" stroke-width="0.95" opacity="0.40"/>
<path d="M90.6 121 Q95.3 64.3 114.2 83.2" stroke="#a0a0a0" stroke-width="0.76" opacity="0.36"/>
<path d="M128.7 121 Q123.8 64.8 104.1 78.0" stroke="#505050" stroke-width="0.64" opacity="0.39"/>
<path d="M199.6 121 Q203.7 48.5 220.5 68.2" stroke="#a0a0a0" stroke-width="0.85" opacity="0.50"/>
<path d="M120.1 121 Q116.1 58.1 100.3 71.8" stroke="#a0a0a0" stroke-width="1.10" opacity="0.63"/>
<path d="M58.3 121 Q62.9 49.8 81.3 77.3" stroke="#505050" stroke-width="0.97" opacity="0.47"/>
<path d="M275.4 121 Q280.3 58.6 299.7 66.5" stroke="#505050" stroke-width="0.82" opacity="0.38"/>
<path d="M144.1 121 Q139.3 88.3 120.1 91.6" stroke="#505050" stroke-width="1.00" opacity="0.56"/>
<path d="M70.0 121 Q73.3 59.4 86.4 73.3" stroke="#505050" stroke-width="0.72" opacity="0.54"/>
<path d="M308.3 121 Q304.7 65.0 290.4 76.2" stroke="#505050" stroke-width="0.80" opacity="0.44"/>
<path d="M125.4 121 Q127.4 90.0 135.5 98.9" stroke="#505050" stroke-width="0.83" opacity="0.52"/>
<path d="M69.4 121 Q72.9 55.5 86.8 67.4" stroke="#505050" stroke-width="0.96" opacity="0.68"/>
<path d="M231.7 121 Q236.1 90.6 253.8 97.2" stroke="#a0a0a0" stroke-width="0.76" opacity="0.58"/>
<path d="M336.7 121 Q333.6 76.6 321.3 88.0" stroke="#505050" stroke-width="0.64" opacity="0.59"/>
<path d="M15.6 121 Q21.2 52.3 43.7 73.3" stroke="#a0a0a0" stroke-width="0.77" opacity="0.43"/>
<path d="M334.0 121 Q339.5 83.1 361.7 91.9" stroke="#505050" stroke-width="0.97" opacity="0.67"/>
<path d="M67.0 121 Q61.2 64.7 38.1 73.0" stroke="#505050" stroke-width="0.82" opacity="0.42"/>
<path d="M226.8 121 Q230.3 57.0 244.6 77.7" stroke="#505050" stroke-width="0.88" opacity="0.59"/>
<path d="M193.6 121 Q188.6 68.4 168.7 89.2" stroke="#505050" stroke-width="0.88" opacity="0.64"/>
<path d="M29.9 121 Q24.7 53.4 3.9 81.8" stroke="#505050" stroke-width="0.72" opacity="0.51"/>
<path d="M72.9 121 Q71.5 76.1 65.9 89.9" stroke="#a0a0a0" stroke-width="0.84" opacity="0.44"/>
<path d="M317.6 121 Q315.4 71.2 306.6 80.4" stroke="#a0a0a0" stroke-width="0.69" opacity="0.42"/>
<path d="M125.4 121 Q129.9 70.7 147.8 91.9" stroke="#a0a0a0" stroke-width="0.84" opacity="0.36"/>
<path d="M251.7 121 Q253.7 50.4 261.5 78.2" stroke="#a0a0a0" stroke-width="0.73" opacity="0.47"/>
<path d="M100.6 121 Q103.6 48.3 115.3 73.4" stroke="#505050" stroke-width="0.82" opacity="0.41"/>
<path d="M107.2 121 Q111.7 84.3 129.5 88.9" stroke="#a0a0a0" stroke-width="1.00" opacity="0.69"/>
<path d="M329.1 121 Q330.9 86.2 338.1 90.4" stroke="#505050" stroke-width="1.03" opacity="0.68"/>
<path d="M69.7 121 Q66.2 50.6 52.3 63.0" stroke="#505050" stroke-width="0.87" opacity="0.44"/>
<path d="M118.7 121 Q123.3 52.6 141.7 76.7" stroke="#a0a0a0" stroke-width="0.62" opacity="0.47"/>
<path d="M28.8 121 Q33.4 52.5 51.9 59.1" stroke="#a0a0a0" stroke-width="0.94" opacity="0.56"/>
<path d="M266.5 121 Q263.0 71.3 248.7 84.5" stroke="#505050" stroke-width="0.75" opacity="0.58"/>
<path d="M320.2 121 Q314.2 47.5 290.3 70.0" stroke="#a0a0a0" stroke-width="0.78" opacity="0.50"/>
<path d="M339.2 121 Q333.4 83.0 310.0 98.3" stroke="#505050" stroke-width="1.09" opacity="0.38"/>
<path d="M120.0 121 Q125.6 88.4 148.0 97.8" stroke="#a0a0a0" stroke-width="0.97" opacity="0.44"/>
<path d="M122.9 121 Q128.5 74.3 150.8 92.3" stroke="#505050" stroke-width="1.08" opacity="0.67"/>
<path d="M330.6 121 Q325.4 75.4 304.6 82.3" stroke="#505050" stroke-width="0.68" opacity="0.47"/>
<path d="M124.6 121 Q120.1 85.6 102.0 100.0" stroke="#505050" stroke-width="0.68" opacity="0.49"/>
<path d="M219.7 121 Q225.3 53.4 247.3 81.7" stroke="#505050" stroke-width="1.04" opacity="0.45"/>
<path d="M218.8 121 Q220.1 69.1 225.2 87.2" stroke="#a0a0a0" stroke-width="0.92" opacity="0.47"/>
<path d="M210.6 121 Q213.2 67.2 223.8 79.2" stroke="#505050" stroke-width="0.99" opacity="0.47"/>
<path d="M300.5 121 Q305.9 85.0 327.7 98.7" stroke="#505050" stroke-width="0.72" opacity="0.67"/>
<path d="M228.4 121 Q231.9 80.1 246.1 90.5" stroke="#a0a0a0" stroke-width="1.09" opacity="0.49"/>
<path d="M293.2 121 Q288.2 83.9 268.3 89.3" stroke="#505050" stroke-width="0.75" opacity="0.68"/>
<path d="M328.3 121 Q322.4 64.1 298.9 85.6" stroke="#505050" stroke-width="0.82" opacity="0.60"/>
<path d="M20.8 121 Q15.2 47.9 -7.4 60.2" stroke="#505050" stroke-width="0.95" opacity="0.70"/>
<path d="M240.4 121 Q244.6 72.2 261.5 77.6" stroke="#505050" stroke-width="0.64" opacity="0.40"/>
<path d="M238.3 121 Q236.4 50.4 228.8 75.3" stroke="#505050" stroke-width="0.73" opacity="0.65"/>
<path d="M316.2 121 Q320.7 53.7 338.5 72.1" stroke="#505050" stroke-width="0.85" opacity="0.49"/>
<path d="M104.0 121 Q98.2 70.9 74.9 77.0" stroke="#505050" stroke-width="1.02" opacity="0.45"/>
<path d="M202.6 121 Q206.0 65.7 219.4 78.3" stroke="#505050" stroke-width="0.64" opacity="0.54"/>
<path d="M277.5 121 Q280.3 69.9 291.5 82.0" stroke="#505050" stroke-width="0.69" opacity="0.63"/>
<path d="M68.9 121 Q65.3 52.2 51.1 69.2" stroke="#a0a0a0" stroke-width="0.76" opacity="0.54"/>
<path d="M89.9 121 Q95.7 68.0 119.1 84.2" stroke="#505050" stroke-width="0.94" opacity="0.57"/>
<path d="M224.9 121 Q229.9 75.0 249.7 94.5" stroke="#505050" stroke-width="1.04" opacity="0.66"/>
<path d="M99.5 121 Q105.4 85.4 128.9 90.6" stroke="#505050" stroke-width="0.72" opacity="0.66"/>
<path d="M75.5 121 Q71.9 78.1 57.6 84.9" stroke="#505050" stroke-width="0.93" opacity="0.59"/>
<path d="M239.0 121 Q235.7 69.2 222.7 85.6" stroke="#505050" stroke-width="0.74" opacity="0.62"/>
<path d="M294.5 121 Q290.0 72.9 271.9 91.1" stroke="#a0a0a0" stroke-width="0.98" opacity="0.47"/>
<path d="M119.0 121 Q120.3 49.3 125.9 79.5" stroke="#a0a0a0" stroke-width="1.04" opacity="0.38"/>
<path d="M192.7 121 Q194.1 88.0 199.7 98.2" stroke="#505050" stroke-width="0.92" opacity="0.53"/>
<path d="M132.6 121 Q126.9 89.8 103.8 99.6" stroke="#505050" stroke-width="0.79" opacity="0.63"/>
<path d="M-3.3 121 Q-7.2 82.4 -22.9 88.4" stroke="#505050" stroke-width="0.67" opacity="0.61"/>
<path d="M96.0 121 Q100.7 74.6 119.6 90.0" stroke="#505050" stroke-width="1.03" opacity="0.41"/>
<path d="M34.1 121 Q31.2 52.5 19.8 67.2" stroke="#a0a0a0" stroke-width="0.95" opacity="0.43"/>
<path d="M198.7 121 Q193.7 66.2 173.7 74.8" stroke="#505050" stroke-width="1.06" opacity="0.68"/>
<path d="M39.6 121 Q44.8 59.6 65.8 67.0" stroke="#505050" stroke-width="0.71" opacity="0.46"/>
<path d="M174.3 121 Q178.6 90.2 195.7 97.1" stroke="#505050" stroke-width="0.83" opacity="0.57"/>
<path d="M160.9 121 Q155.5 51.8 133.6 70.1" stroke="#a0a0a0" stroke-width="0.96" opacity="0.42"/>
<path d="M83.3 121 Q77.6 82.6 54.5 93.1" stroke="#505050" stroke-width="0.77" opacity="0.42"/>
<path d="M112.6 121 Q114.6 86.2 122.5 98.3" stroke="#a0a0a0" stroke-width="0.80" opacity="0.50"/>
<path d="M209.8 121 Q206.1 51.6 191.1 63.7" stroke="#505050" stroke-width="0.72" opacity="0.60"/>
<path d="M39.8 121 Q35.3 65.2 17.1 81.1" stroke="#a0a0a0" stroke-width="1.03" opacity="0.57"/>
<path d="M127.3 121 Q121.6 48.8 98.4 79.5" stroke="#505050" stroke-width="0.83" opacity="0.56"/>
<path d="M87.9 121 Q90.6 60.6 101.3 67.3" stroke="#505050" stroke-width="0.63" opacity="0.67"/>
<path d="M256.4 121 Q251.7 78.7 233.0 83.8" stroke="#505050" stroke-width="1.08" opacity="0.69"/>
<path d="M65.4 121 Q63.3 89.6 54.9 102.2" stroke="#a0a0a0" stroke-width="0.98" opacity="0.36"/>
<path d="M231.7 121 Q234.1 75.8 243.9 94.4" stroke="#505050" stroke-width="0.81" opacity="0.53"/>
<path d="M180.0 121 Q177.3 91.3 166.8 100.5" stroke="#a0a0a0" stroke-width="0.78" opacity="0.56"/>
<path d="M181.9 121 Q176.5 55.9 155.1 79.5" stroke="#505050" stroke-width="1.07" opacity="0.57"/>
<path d="M158.3 121 Q161.8 77.2 175.8 84.2" stroke="#a0a0a0" stroke-width="0.94" opacity="0.53"/>
<path d="M167.5 121 Q171.9 83.1 189.6 91.3" stroke="#a0a0a0" stroke-width="1.00" opacity="0.42"/>
<path d="M95.5 121 Q99.5 51.7 115.6 69.8" stroke="#505050" stroke-width="0.83" opacity="0.59"/>
<path d="M131.7 121 Q134.3 66.0 144.3 73.9" stroke="#505050" stroke-width="0.75" opacity="0.66"/>
<path d="M236.6 121 Q233.7 62.6 221.8 71.8" stroke="#505050" stroke-width="0.83" opacity="0.62"/>
<path d="M285.4 121 Q279.5 56.1 256.2 70.2" stroke="#505050" stroke-width="0.99" opacity="0.50"/>
<path d="M102.4 121 Q105.9 59.5 119.7 71.4" stroke="#505050" stroke-width="0.72" opacity="0.56"/>
<path d="M3.5 121 Q7.2 66.0 22.2 81.0" stroke="#a0a0a0" stroke-width="0.77" opacity="0.36"/>
<path d="M-0.7 121 Q2.8 63.5 16.8 75.9" stroke="#a0a0a0" stroke-width="0.77" opacity="0.60"/>
<path d="M66.7 121 Q63.2 53.3 49.3 81.2" stroke="#505050" stroke-width="0.93" opacity="0.57"/>
<path d="M319.6 121 Q314.9 56.7 296.0 80.1" stroke="#505050" stroke-width="1.00" opacity="0.39"/>
<path d="M48.0 121 Q44.8 57.7 32.3 72.5" stroke="#505050" stroke-width="0.72" opacity="0.62"/>
<path d="M312.6 121 Q315.6 83.0 327.7 96.6" stroke="#a0a0a0" stroke-width="0.83" opacity="0.61"/>
<path d="M321.5 121 Q323.0 59.9 329.1 78.3" stroke="#a0a0a0" stroke-width="0.91" opacity="0.37"/>
<path d="M18.4 121 Q22.5 69.6 39.0 80.5" stroke="#505050" stroke-width="0.73" opacity="0.59"/>
<path d="M317.9 121 Q314.4 65.6 300.3 83.2" stroke="#505050" stroke-width="0.89" opacity="0.70"/>
<path d="M43.3 121 Q41.9 86.6 36.6 101.0" stroke="#505050" stroke-width="1.01" opacity="0.64"/>
<path d="M97.3 121 Q94.8 80.0 85.0 94.0" stroke="#a0a0a0" stroke-width="1.07" opacity="0.60"/>
<path d="M240.0 121 Q245.9 70.5 269.6 77.1" stroke="#505050" stroke-width="0.87" opacity="0.46"/>
<path d="M317.0 121 Q318.6 66.5 325.2 75.6" stroke="#505050" stroke-width="0.74" opacity="0.44"/>
<path d="M256.1 121 Q250.5 67.7 228.4 77.9" stroke="#505050" stroke-width="0.83" opacity="0.41"/>
<path d="M135.9 121 Q140.8 74.6 160.5 81.0" stroke="#505050" stroke-width="1.02" opacity="0.36"/>
<path d="M114.0 121 Q119.0 75.7 138.9 91.7" stroke="#505050" stroke-width="0.70" opacity="0.48"/>
<path d="M25.0 121 Q19.3 65.8 -3.5 88.4" stroke="#505050" stroke-width="0.77" opacity="0.48"/>
<path d="M18.5 121 Q13.0 51.4 -9.0 64.2" stroke="#a0a0a0" stroke-width="0.67" opacity="0.62"/>
<path d="M146.0 121 Q147.5 55.6 153.3 71.5" stroke="#505050" stroke-width="1.04" opacity="0.60"/>
<path d="M196.1 121 Q190.3 65.3 167.2 87.9" stroke="#505050" stroke-width="0.67" opacity="0.60"/>
<path d="M261.3 121 Q266.8 78.4 288.7 94.1" stroke="#a0a0a0" stroke-width="0.70" opacity="0.59"/>
<path d="M325.9 121 Q330.9 80.1 351.0 89.3" stroke="#505050" stroke-width="0.95" opacity="0.47"/>
<path d="M59.4 121 Q57.0 68.6 47.6 87.9" stroke="#505050" stroke-width="0.86" opacity="0.37"/>
<path d="M199.5 121 Q196.4 66.8 184.1 74.8" stroke="#505050" stroke-width="0.71" opacity="0.49"/>
<path d="M251.3 121 Q255.1 51.8 270.4 72.0" stroke="#505050" stroke-width="0.65" opacity="0.68"/>
<path d="M285.8 121 Q282.0 58.6 266.5 81.9" stroke="#a0a0a0" stroke-width="0.75" opacity="0.55"/>
<path d="M317.7 121 Q319.8 69.0 327.9 80.5" stroke="#505050" stroke-width="1.02" opacity="0.57"/>
<path d="M297.2 121 Q294.7 77.7 284.5 90.9" stroke="#505050" stroke-width="0.72" opacity="0.43"/>
<path d="M283.5 121 Q281.1 56.5 271.2 66.9" stroke="#a0a0a0" stroke-width="1.02" opacity="0.55"/>
<path d="M105.6 121 Q111.2 75.4 133.3 90.5" stroke="#505050" stroke-width="0.67" opacity="0.61"/>
<path d="M298.7 121 Q296.9 56.1 289.9 69.2" stroke="#a0a0a0" stroke-width="0.62" opacity="0.67"/>
<path d="M273.7 121 Q277.7 71.8 293.8 78.6" stroke="#505050" stroke-width="0.69" opacity="0.61"/>
<path d="M69.7 121 Q73.3 67.5 87.9 75.4" stroke="#a0a0a0" stroke-width="0.62" opacity="0.39"/>
<path d="M221.0 121 Q216.5 90.9 198.5 103.5" stroke="#505050" stroke-width="0.61" opacity="0.47"/>
<path d="M44.3 121 Q41.9 50.1 32.2 77.6" stroke="#505050" stroke-width="0.61" opacity="0.35"/>
<path d="M323.7 121 Q321.3 71.5 311.7 78.2" stroke="#a0a0a0" stroke-width="0.77" opacity="0.57"/>
<path d="M320.8 121 Q322.3 62.0 328.7 69.2" stroke="#505050" stroke-width="0.88" opacity="0.36"/>
<path d="M314.9 121 Q318.4 66.2 332.3 75.5" stroke="#505050" stroke-width="1.03" opacity="0.55"/>
<path d="M125.6 121 Q130.8 76.7 151.8 88.6" stroke="#505050" stroke-width="0.83" opacity="0.62"/>
<path d="M-5.1 121 Q-9.1 64.7 -25.2 77.5" stroke="#505050" stroke-width="0.97" opacity="0.39"/>
<path d="M274.1 121 Q275.8 78.9 282.4 95.8" stroke="#505050" stroke-width="1.01" opacity="0.38"/>
<path d="M95.2 121 Q96.5 59.4 101.8 71.5" stroke="#a0a0a0" stroke-width="1.01" opacity="0.51"/>
<path d="M252.9 121 Q250.8 54.7 242.3 61.5" stroke="#a0a0a0" stroke-width="0.86" opacity="0.49"/>
<path d="M337.7 121 Q341.3 56.1 355.8 81.0" stroke="#505050" stroke-width="0.67" opacity="0.56"/>
<path d="M107.2 121 Q110.8 66.5 125.2 83.9" stroke="#a0a0a0" stroke-width="0.89" opacity="0.55"/>
<path d="M105.4 121 Q100.0 70.5 78.2 76.3" stroke="#a0a0a0" stroke-width="0.76" opacity="0.57"/>
<path d="M-2.9 121 Q2.5 86.1 24.1 99.7" stroke="#a0a0a0" stroke-width="0.61" opacity="0.36"/>
<path d="M132.2 121 Q130.1 50.2 121.9 64.2" stroke="#a0a0a0" stroke-width="0.63" opacity="0.55"/>
<path d="M28.4 121 Q33.3 76.9 53.1 92.0" stroke="#a0a0a0" stroke-width="0.88" opacity="0.54"/>
<path d="M262.1 121 Q263.8 86.9 270.4 96.2" stroke="#505050" stroke-width="1.04" opacity="0.42"/>
<path d="M81.0 121 Q76.8 70.3 60.2 81.5" stroke="#505050" stroke-width="0.95" opacity="0.44"/>
<path d="M223.2 121 Q226.7 55.9 240.8 65.7" stroke="#a0a0a0" stroke-width="1.08" opacity="0.36"/>
<path d="M192.6 121 Q187.2 82.4 165.5 90.1" stroke="#505050" stroke-width="1.08" opacity="0.50"/>
<path d="M55.3 121 Q58.9 48.9 73.5 70.1" stroke="#505050" stroke-width="0.96" opacity="0.69"/>
<path d="M191.2 121 Q185.8 77.1 164.1 94.2" stroke="#a0a0a0" stroke-width="1.05" opacity="0.66"/>
<path d="M110.7 121 Q115.7 90.9 135.8 100.3" stroke="#a0a0a0" stroke-width="0.93" opacity="0.43"/>
<path d="M238.9 121 Q240.1 87.7 245.2 96.7" stroke="#a0a0a0" stroke-width="0.90" opacity="0.69"/>
<path d="M293.8 121 Q299.5 54.4 322.1 76.4" stroke="#a0a0a0" stroke-width="0.61" opacity="0.56"/>
<path d="M120.2 121 Q122.9 68.7 133.6 82.4" stroke="#a0a0a0" stroke-width="0.96" opacity="0.67"/>
<path d="M263.9 121 Q269.3 51.4 291.0 62.1" stroke="#505050" stroke-width="0.73" opacity="0.53"/>
<path d="M52.9 121 Q55.7 55.7 66.9 82.2" stroke="#a0a0a0" stroke-width="0.81" opacity="0.60"/>
<path d="M304.3 121 Q310.1 48.7 333.4 76.6" stroke="#505050" stroke-width="1.03" opacity="0.47"/>
<path d="M93.9 121 Q91.4 62.9 81.5 77.9" stroke="#505050" stroke-width="0.84" opacity="0.40"/>
<path d="M164.5 121 Q158.9 82.7 136.9 96.1" stroke="#a0a0a0" stroke-width="0.96" opacity="0.48"/>
<path d="M113.1 121 Q111.4 84.5 104.5 90.1" stroke="#505050" stroke-width="0.98" opacity="0.38"/>
<path d="M205.5 121 Q199.8 63.3 176.8 78.1" stroke="#a0a0a0" stroke-width="0.91" opacity="0.54"/>
<path d="M0.1 121 Q4.6 83.0 22.6 99.0" stroke="#505050" stroke-width="0.82" opacity="0.44"/>
<path d="M271.3 121 Q275.7 60.3 293.1 77.8" stroke="#a0a0a0" stroke-width="0.62" opacity="0.52"/>
<path d="M10.5 121 Q8.9 49.5 2.5 72.0" stroke="#505050" stroke-width="0.87" opacity="0.44"/>
<path d="M325.2 121 Q323.4 52.6 316.3 77.5" stroke="#a0a0a0" stroke-width="0.88" opacity="0.51"/>
<path d="M9.2 121 Q6.1 49.6 -6.3 73.2" stroke="#a0a0a0" stroke-width="0.73" opacity="0.38"/>
<path d="M170.2 121 Q166.2 56.2 150.3 74.7" stroke="#505050" stroke-width="1.00" opacity="0.44"/>
<path d="M31.2 121 Q36.6 73.2 58.3 82.8" stroke="#505050" stroke-width="1.01" opacity="0.35"/>
<path d="M207.9 121 Q209.5 78.5 216.0 90.5" stroke="#a0a0a0" stroke-width="0.92" opacity="0.36"/>
<path d="M61.2 121 Q65.2 80.7 81.2 97.5" stroke="#505050" stroke-width="0.66" opacity="0.41"/>
<path d="M331.5 121 Q336.4 75.7 355.7 90.9" stroke="#505050" stroke-width="0.71" opacity="0.69"/>
<path d="M124.0 121 Q127.5 77.1 141.3 87.4" stroke="#505050" stroke-width="1.09" opacity="0.58"/>
<path d="M188.6 121 Q182.8 72.0 159.7 81.5" stroke="#a0a0a0" stroke-width="0.67" opacity="0.54"/>
<path d="M54.2 121 Q49.4 52.3 30.2 73.1" stroke="#505050" stroke-width="0.72" opacity="0.61"/>
<path d="M333.6 121 Q336.3 85.0 347.3 100.0" stroke="#505050" stroke-width="0.72" opacity="0.39"/>
<path d="M140.6 121 Q142.8 86.3 151.5 94.0" stroke="#505050" stroke-width="0.82" opacity="0.42"/>
<path d="M128.4 121 Q131.4 90.6 143.0 94.8" stroke="#a0a0a0" stroke-width="1.01" opacity="0.67"/>
<path d="M248.3 121 Q251.1 53.0 262.3 79.4" stroke="#505050" stroke-width="0.97" opacity="0.66"/>
<path d="M207.4 121 Q203.2 55.7 186.4 79.1" stroke="#505050" stroke-width="0.66" opacity="0.66"/>
<path d="M168.5 121 Q172.1 54.7 186.2 61.4" stroke="#505050" stroke-width="1.02" opacity="0.70"/>
<path d="M278.5 121 Q274.5 67.6 258.7 79.6" stroke="#505050" stroke-width="0.87" opacity="0.43"/>
<path d="M189.4 121 Q191.4 59.0 199.5 70.0" stroke="#a0a0a0" stroke-width="0.73" opacity="0.66"/>
<path d="M189.7 121 Q187.7 65.5 179.7 74.9" stroke="#505050" stroke-width="0.87" opacity="0.46"/>
<path d="M307.7 121 Q303.7 64.0 287.7 70.5" stroke="#505050" stroke-width="0.92" opacity="0.42"/>
<path d="M46.0 121 Q42.2 51.4 27.2 81.1" stroke="#a0a0a0" stroke-width="0.78" opacity="0.63"/>
<path d="M253.9 121 Q251.7 86.2 242.9 89.6" stroke="#505050" stroke-width="0.92" opacity="0.41"/>
<path d="M104.7 121 Q106.0 63.4 111.3 74.5" stroke="#a0a0a0" stroke-width="1.07" opacity="0.36"/>
<path d="M-9.1 121 Q-7.3 51.5 -0.4 64.1" stroke="#505050" stroke-width="0.78" opacity="0.58"/>
<path d="M135.5 121 Q131.3 86.5 114.5 95.3" stroke="#505050" stroke-width="1.08" opacity="0.48"/>
<path d="M0.5 121 Q-1.6 85.7 -10.1 89.1" stroke="#a0a0a0" stroke-width="0.72" opacity="0.42"/>
<path d="M17.9 121 Q15.9 87.3 8.0 101.5" stroke="#a0a0a0" stroke-width="0.97" opacity="0.50"/>
<path d="M-9.9 121 Q-14.6 90.0 -33.3 98.7" stroke="#505050" stroke-width="0.68" opacity="0.59"/>
<path d="M251.0 121 Q248.7 73.3 239.2 91.5" stroke="#a0a0a0" stroke-width="0.95" opacity="0.43"/>
<path d="M41.0 121 Q44.1 87.0 56.4 96.4" stroke="#505050" stroke-width="0.64" opacity="0.47"/>
<path d="M297.8 121 Q303.0 52.3 323.6 62.9" stroke="#505050" stroke-width="0.75" opacity="0.69"/>
<path d="M154.1 121 Q159.9 88.4 183.2 102.3" stroke="#505050" stroke-width="0.99" opacity="0.42"/>
</g>
<path d="M0 284 L0 117 L0.0 116.3 L6.2 114.7 L15.4 114.0 L22.5 118.5 L26.9 116.8 L34.6 114.2 L40.9 117.5 L47.6 117.6 L52.6 115.2 L57.2 116.5 L66.8 117.0 L75.4 115.9 L83.9 114.5 L89.6 117.4 L98.0 116.1 L102.5 115.3 L107.8 115.4 L116.6 115.0 L126.0 118.4 L130.3 115.9 L137.2 114.1 L143.8 118.5 L148.5 117.0 L153.2 116.9 L162.6 115.0 L166.6 114.4 L173.8 114.1 L178.4 116.5 L187.9 116.1 L194.3 117.2 L198.8 116.9 L203.9 117.0 L213.6 114.3 L220.9 117.0 L225.8 115.3 L235.8 119.0 L240.5 117.5 L250.2 115.2 L257.9 114.2 L264.1 117.4 L271.7 117.9 L276.2 115.7 L285.4 116.9 L292.1 116.0 L302.0 116.9 L306.1 118.0 L312.1 116.2 L317.3 116.2 L323.3 114.4 L331.0 117.0 L331 284 Z" fill="url(#soil)"/>
<rect x="0" y="117" width="331" height="167" fill="#000" filter="url(#noise)" opacity="0.45"/>
<rect x="0" y="117" width="331" height="167" fill="#fff" filter="url(#noisew)" opacity="0.25"/>
<rect x="0" y="117" width="331" height="167" fill="#000" filter="url(#blotch)" opacity="0.25"/>
<rect x="0" y="240" width="331" height="44" fill="url(#soilshade)"/>
<rect x="0" y="284" width="331" height="31" fill="url(#ribs)"/>
<rect x="0" y="315" width="331" height="126" fill="#363636"/>
<rect x="0" y="315" width="331" height="126" fill="#000" filter="url(#noise)" opacity="0.6"/>
<rect x="0" y="315" width="331" height="126" fill="#fff" filter="url(#noisew)" opacity="0.18"/>
</svg></div>
<div style="position:absolute;left:18px;top:83px;width:314px;height:394px;border:1px solid #e9e9e9;box-shadow:inset 1px 1px 0 #c8c8c8;"></div>
<div class="t" style="left:22.0px;top:78.8px;font-size:8.3px;color:#141414;font-weight:normal;font-family:'Liberation Sans',sans-serif;transform:scaleX(0.830);transform-origin:0 0;background:#d1d1d1;padding:0 2px 0 0;">Datos</div>
<div style="position:absolute;left:28px;top:101px;width:134px;height:45px;border:1px solid #e9e9e9;box-shadow:inset 1px 1px 0 #c8c8c8;"></div>
<div class="t" style="left:32.6px;top:96.8px;font-size:8.3px;color:#141414;font-weight:normal;font-family:'Liberation Sans',sans-serif;transform:scaleX(0.852);transform-origin:0 0;background:#d1d1d1;padding:0 2px 0 0;">Definir Unidades</div>
<svg style="position:absolute;left:37px;top:113px" width="12" height="10"><path d="M1 5.5 L4.2 8.5 L10.5 1.5" fill="none" stroke="#7e7e7e" stroke-width="2.1" stroke-linejoin="round"/></svg>
<div class="t" style="left:54.5px;top:114.4px;font-size:8.3px;color:#141414;font-weight:normal;font-family:'Liberation Sans',sans-serif;transform:scaleX(0.862);transform-origin:0 0;">Tiempo</div>
<svg style="position:absolute;left:37px;top:129px" width="12" height="10"><path d="M1 5.5 L4.2 8.5 L10.5 1.5" fill="none" stroke="#7e7e7e" stroke-width="2.1" stroke-linejoin="round"/></svg>
<div class="t" style="left:54.5px;top:130.7px;font-size:8.3px;color:#141414;font-weight:normal;font-family:'Liberation Sans',sans-serif;transform:scaleX(0.857);transform-origin:0 0;">Espacio</div>
<div style="position:absolute;left:28px;top:161px;width:134px;height:71px;border:1px solid #e9e9e9;box-shadow:inset 1px 1px 0 #c8c8c8;"></div>
<div class="t" style="left:32.6px;top:156.8px;font-size:8.3px;color:#141414;font-weight:normal;font-family:'Liberation Sans',sans-serif;transform:scaleX(0.853);transform-origin:0 0;background:#d1d1d1;padding:0 2px 0 0;">Sistema de drenaje</div>
<svg style="position:absolute;left:37px;top:170px" width="12" height="10"><path d="M1 5.5 L4.2 8.5 L10.5 1.5" fill="none" stroke="#7e7e7e" stroke-width="2.1" stroke-linejoin="round"/></svg>
<div class="t" style="left:54.7px;top:171.8px;font-size:8.3px;color:#141414;font-weight:normal;font-family:'Liberation Sans',sans-serif;transform:scaleX(0.846);transform-origin:0 0;">Sistema de drenaje</div>
<svg style="position:absolute;left:55px;top:191px" width="12" height="10"><path d="M1 5.5 L4.2 8.5 L10.5 1.5" fill="none" stroke="#7e7e7e" stroke-width="2.1" stroke-linejoin="round"/></svg>
<div class="t" style="left:72.0px;top:192.8px;font-size:8.3px;color:#000;font-weight:normal;font-family:'Liberation Sans',sans-serif;transform:scaleX(0.855);transform-origin:0 0;-webkit-text-stroke:0.45px #000;">Modelo numérico</div>
<div class="t" style="left:72.0px;top:211.8px;font-size:8.3px;color:#2a2a2a;font-weight:normal;font-family:'Liberation Sans',sans-serif;transform:scaleX(0.876);transform-origin:0 0;">Solución analítica</div>
<div class="t" style="left:27.0px;top:250.3px;font-size:8.6px;color:#141414;font-weight:normal;font-family:'Liberation Sans',sans-serif;transform:scaleX(0.976);transform-origin:0 0;">Solución analítica</div>
<div style="position:absolute;left:28px;top:275px;width:134px;height:68px;border:1px solid #e9e9e9;box-shadow:inset 1px 1px 0 #c8c8c8;"></div>
<div class="t" style="left:32.6px;top:270.9px;font-size:8.3px;color:#141414;font-weight:normal;font-family:'Liberation Sans',sans-serif;transform:scaleX(0.850);transform-origin:0 0;background:#d1d1d1;padding:0 2px 0 0;">Régimen Permanente</div>
<div class="t" style="left:57.0px;top:287.6px;font-size:8.3px;color:#141414;font-weight:normal;font-family:'Liberation Sans',sans-serif;transform:scaleX(0.857);transform-origin:0 0;">Flujo de drenaje</div>
<div class="t" style="left:57.0px;top:296.1px;font-size:8.3px;color:#141414;font-weight:normal;font-family:'Liberation Sans',sans-serif;transform:scaleX(0.867);transform-origin:0 0;">(Hooghoudt, 1940)</div>
<div class="t" style="left:57.0px;top:316.1px;font-size:8.3px;color:#141414;font-weight:normal;font-family:'Liberation Sans',sans-serif;transform:scaleX(0.864);transform-origin:0 0;">Separación entre drenes</div>
<div class="t" style="left:57.0px;top:324.6px;font-size:8.3px;color:#141414;font-weight:normal;font-family:'Liberation Sans',sans-serif;transform:scaleX(0.867);transform-origin:0 0;">(Hooghoudt, 1940)</div>
<div style="position:absolute;left:28px;top:358px;width:134px;height:49px;border:1px solid #e9e9e9;box-shadow:inset 1px 1px 0 #c8c8c8;"></div>
<div class="t" style="left:32.6px;top:353.9px;font-size:8.3px;color:#141414;font-weight:normal;font-family:'Liberation Sans',sans-serif;transform:scaleX(0.854);transform-origin:0 0;background:#d1d1d1;padding:0 2px 0 0;">Régimen Transitorio</div>
<div class="t" style="left:57.0px;top:371.6px;font-size:8.3px;color:#141414;font-weight:normal;font-family:'Liberation Sans',sans-serif;transform:scaleX(0.847);transform-origin:0 0;">Glover-Dumm (1954)</div>
<div class="t" style="left:57.0px;top:390.5px;font-size:8.3px;color:#141414;font-weight:normal;font-family:'Liberation Sans',sans-serif;transform:scaleX(0.862);transform-origin:0 0;">Fuentes et al. (1997)</div>
<div class="t" style="left:186.8px;top:98.5px;font-size:8.6px;color:#141414;font-weight:normal;font-family:'Liberation Sans',sans-serif;">Modelo numérico</div>
<div style="position:absolute;left:188px;top:122px;width:132px;height:44px;border:1px solid #e9e9e9;box-shadow:inset 1px 1px 0 #c8c8c8;"></div>
<div class="t" style="left:191.5px;top:117.8px;font-size:8.3px;color:#141414;font-weight:normal;font-family:'Liberation Sans',sans-serif;transform:scaleX(0.851);transform-origin:0 0;background:#d1d1d1;padding:0 2px 0 0;">Dren</div>
<svg style="position:absolute;left:196px;top:131px" width="12" height="10"><path d="M1 5.5 L4.2 8.5 L10.5 1.5" fill="none" stroke="#7e7e7e" stroke-width="2.1" stroke-linejoin="round"/></svg>
<div class="t" style="left:212.7px;top:132.5px;font-size:8.3px;color:#141414;font-weight:normal;font-family:'Liberation Sans',sans-serif;transform:scaleX(0.855);transform-origin:0 0;">Características</div>
<svg style="position:absolute;left:196px;top:149px" width="12" height="10"><path d="M1 5.5 L4.2 8.5 L10.5 1.5" fill="none" stroke="#7e7e7e" stroke-width="2.1" stroke-linejoin="round"/></svg>
<div class="t" style="left:212.7px;top:150.8px;font-size:8.3px;color:#141414;font-weight:normal;font-family:'Liberation Sans',sans-serif;transform:scaleX(0.855);transform-origin:0 0;">Características</div>
<div style="position:absolute;left:188px;top:185px;width:132px;height:140px;border:1px solid #e9e9e9;box-shadow:inset 1px 1px 0 #c8c8c8;"></div>
<div class="t" style="left:192.0px;top:180.8px;font-size:8.3px;color:#141414;font-weight:normal;font-family:'Liberation Sans',sans-serif;transform:scaleX(0.855);transform-origin:0 0;background:#d1d1d1;padding:0 2px 0 0;">Propiedades de los suelos</div>
<div class="t" style="left:213.0px;top:195.8px;font-size:8.3px;color:#141414;font-weight:normal;font-family:'Liberation Sans',sans-serif;transform:scaleX(0.855);transform-origin:0 0;">Conductividad</div>
<div class="t" style="left:213.6px;top:217.8px;font-size:8.3px;color:#141414;font-weight:normal;font-family:'Liberation Sans',sans-serif;transform:scaleX(0.855);transform-origin:0 0;">Porosidad</div>
<div style="position:absolute;left:195px;top:240px;width:118px;height:77px;border:1px solid #e9e9e9;box-shadow:inset 1px 1px 0 #c8c8c8;"></div>
<div class="t" style="left:198.5px;top:235.8px;font-size:8.3px;color:#141414;font-weight:normal;font-family:'Liberation Sans',sans-serif;transform:scaleX(0.855);transform-origin:0 0;background:#d1d1d1;padding:0 2px 0 0;">Capacidad de drenaje</div>
<div class="t" style="left:220.7px;top:249.8px;font-size:8.3px;color:#141414;font-weight:normal;font-family:'Liberation Sans',sans-serif;transform:scaleX(0.855);transform-origin:0 0;">Constante</div>
<div style="position:absolute;left:205px;top:271px;width:101px;height:38px;border:1px solid #e9e9e9;box-shadow:inset 1px 1px 0 #c8c8c8;"></div>
<div class="t" style="left:210.0px;top:266.9px;font-size:8.3px;color:#141414;font-weight:normal;font-family:'Liberation Sans',sans-serif;transform:scaleX(0.855);transform-origin:0 0;background:#d1d1d1;padding:0 2px 0 0;">Variable</div>
<div class="t" style="left:232.0px;top:282.5px;font-size:8.3px;color:#141414;font-weight:normal;font-family:'Liberation Sans',sans-serif;transform:scaleX(0.855);transform-origin:0 0;">Función</div>
<div class="t" style="left:232.0px;top:297.6px;font-size:8.3px;color:#141414;font-weight:normal;font-family:'Liberation Sans',sans-serif;transform:scaleX(0.855);transform-origin:0 0;">Función</div>
<div style="position:absolute;left:188px;top:337px;width:132px;height:70px;border:1px solid #e9e9e9;box-shadow:inset 1px 1px 0 #c8c8c8;"></div>
<div class="t" style="left:191.6px;top:332.9px;font-size:8.3px;color:#141414;font-weight:normal;font-family:'Liberation Sans',sans-serif;transform:scaleX(0.838);transform-origin:0 0;background:#d1d1d1;padding:0 2px 0 0;">Simulación</div>
<div class="t" style="left:212.5px;top:349.6px;font-size:8.3px;color:#141414;font-weight:normal;font-family:'Liberation Sans',sans-serif;transform:scaleX(0.855);transform-origin:0 0;">Discretización</div>
<div class="t" style="left:212.5px;top:364.2px;font-size:8.3px;color:#141414;font-weight:normal;font-family:'Liberation Sans',sans-serif;transform:scaleX(0.855);transform-origin:0 0;">Discretización</div>
<div class="t" style="left:212.5px;top:378.9px;font-size:8.3px;color:#141414;font-weight:normal;font-family:'Liberation Sans',sans-serif;transform:scaleX(0.855);transform-origin:0 0;">Registro</div>
<div class="t" style="left:212.5px;top:393.9px;font-size:8.3px;color:#141414;font-weight:normal;font-family:'Liberation Sans',sans-serif;transform:scaleX(0.855);transform-origin:0 0;">Condiciones</div>
<div style="position:absolute;left:188px;top:421px;width:132px;height:43px;border:1px solid #e9e9e9;box-shadow:inset 1px 1px 0 #c8c8c8;"></div>
<div class="t" style="left:192.0px;top:416.9px;font-size:8.3px;color:#141414;font-weight:normal;font-family:'Liberation Sans',sans-serif;transform:scaleX(0.855);transform-origin:0 0;background:#d1d1d1;padding:0 2px 0 0;">Tipo de calculo</div>
<div class="t" style="left:217.6px;top:432.9px;font-size:8.3px;color:#141414;font-weight:normal;font-family:'Liberation Sans',sans-serif;transform:scaleX(0.845);transform-origin:0 0;">Problema directo</div>
<div class="t" style="left:217.6px;top:447.6px;font-size:8.3px;color:#141414;font-weight:normal;font-family:'Liberation Sans',sans-serif;transform:scaleX(0.845);transform-origin:0 0;">Problema inverso</div>
<div style="position:absolute;left:239px;top:99px;width:447px;height:324px;box-shadow:0 0 6px 3px rgba(0,0,0,0.55), 2px 4px 10px 4px rgba(0,0,0,0.35);border-radius:5px 5px 0 0;background:linear-gradient(90deg,#a8a8a8,#c4c4c4 6%,#9a9a9a 35%,#7e7e7e 50%,#8c8c8c 80%,#8a8a8a);border:1px solid #2a2a2a"></div>
<div style="position:absolute;left:239px;top:118px;width:447px;height:305px;background:linear-gradient(90deg,#808080,#9c9c9c 1.2%,#8c8c8c 98.5%,#a8a8a8 99%,#7a7a7a);border:1.5px solid #222;border-top:none"></div>
<div style="position:absolute;left:245px;top:118px;width:437px;height:302px;background:#d8d8d8;border:1px solid #333"></div>
<div style="position:absolute;left:246px;top:119px;width:435px;height:300px;background:#e6e6e6;border-bottom:1px solid #f4f4f4;border-right:1px solid #f4f4f4"></div>
<svg style="position:absolute;left:246px;top:104px" width="10" height="10"><rect x="5" y="0.5" width="4.5" height="4.5" fill="#e8e8e8" stroke="#999" stroke-width="0.7"/><line x1="7.25" y1="0.5" x2="7.25" y2="5" stroke="#aaa" stroke-width="0.6"/><line x1="5" y1="2.75" x2="9.5" y2="2.75" stroke="#aaa" stroke-width="0.6"/><ellipse cx="2.2" cy="5.2" rx="2" ry="1.6" fill="#222"/><rect x="5" y="7" width="1.5" height="1.5" fill="#444"/><rect x="7.5" y="7" width="1.5" height="1.5" fill="#444"/></svg>
<div class="t" style="left:259.8px;top:105.2px;font-size:8.4px;color:#111;font-weight:normal;font-family:'Liberation Sans',sans-serif;transform:scaleX(0.983);transform-origin:0 0;">Conductividad hidráulica</div>
<div style="position:absolute;left:620px;top:100px;width:62px;height:12px;background:linear-gradient(#a0a0a0,#777 50%,#555);border:1px solid #444;border-radius:0 0 3px 3px;box-shadow:inset 0 0 0 1px rgba(255,255,255,0.35)"></div>
<div style="position:absolute;left:636px;top:100px;width:1px;height:11px;background:#ddd"></div>
<div style="position:absolute;left:653px;top:100px;width:1px;height:11px;background:#ddd"></div>
<div style="position:absolute;left:624px;top:106px;width:8px;height:3px;background:#e8e8e8;border-radius:1px"></div>
<div style="position:absolute;left:641px;top:102px;width:8px;height:7px;border:2px solid #eee"></div>
<div class="t" style="left:663.5px;top:101.5px;font-size:9px;color:#fafafa;font-weight:bold;font-family:'Liberation Sans',sans-serif;">X</div>
<div style="position:absolute;left:259.5px;top:137.5px;width:9px;height:9px;border-radius:50%;border:1px solid #777;background:radial-gradient(#f4f4f4,#c8c8c8)"></div>
<div style="position:absolute;left:261.5px;top:139.5px;width:5px;height:5px;border-radius:50%;background:#333"></div>
<div class="t" style="left:273.0px;top:137.3px;font-size:9.4px;color:#111;font-weight:normal;font-family:'Liberation Sans',sans-serif;">Valor</div>
<div style="position:absolute;left:261px;top:158px;width:408px;height:52px;border:1px solid #f6f6f6;box-shadow:inset 1px 1px 0 #d4d4d4;border-radius:2px;background:#e4e4e4"></div>
<div class="t" style="left:276.7px;top:166.2px;font-size:8.9px;color:#111;font-weight:normal;font-family:'Liberation Sans',sans-serif;">Suelo:</div>
<div class="t" style="left:277.0px;top:192.9px;font-size:8.9px;color:#111;font-weight:normal;font-family:'Liberation Sans',sans-serif;">Textura:</div>
<div style="position:absolute;left:322px;top:162px;width:165px;height:15px;background:#fff;border:1px solid #b4b4b4;border-top:1px solid #5e5e5e;box-shadow:inset 0 1px 0 #d0d0d0"></div>
<div class="t" style="left:324.5px;top:166.4px;font-size:9.2px;color:#111;font-weight:normal;font-family:'Liberation Sans',sans-serif;">Tezoyuca</div>
<div style="position:absolute;left:322px;top:189px;width:165px;height:15px;background:#fff;border:1px solid #b4b4b4;border-top:1px solid #5e5e5e;box-shadow:inset 0 1px 0 #d0d0d0"></div>
<div class="t" style="left:324.5px;top:193.4px;font-size:9.2px;color:#111;font-weight:normal;font-family:'Liberation Sans',sans-serif;">arenosa</div>
<div class="t" style="left:513.4px;top:193.1px;font-size:8.9px;color:#111;font-weight:normal;font-family:'Liberation Sans',sans-serif;">Ks:</div>
<div style="position:absolute;left:534px;top:187px;width:74px;height:16px;background:#fff;border:1px solid #b4b4b4;border-top:1px solid #5e5e5e;box-shadow:inset 0 1px 0 #d0d0d0"></div>
<div class="t" style="left:534px;top:190.5px;width:71px;text-align:right;font-size:9.2px;color:#111">4.392</div>
<div style="position:absolute;left:605px;top:189px;width:1px;height:12px;background:#111"></div>
<div class="t" style="left:613.5px;top:193.4px;font-size:9.2px;color:#111;font-weight:normal;font-family:'Liberation Sans',sans-serif;">m/d</div>
<div style="position:absolute;left:259.5px;top:228.8px;width:9px;height:9px;border-radius:50%;border:1px solid #777;background:radial-gradient(#f4f4f4,#c8c8c8)"></div>
<div class="t" style="left:273.0px;top:228.7px;font-size:9.2px;color:#111;font-weight:normal;font-family:'Liberation Sans',sans-serif;">Base de datos (parámetros de suelos)</div>
<div style="position:absolute;left:261px;top:249px;width:408px;height:126px;border:1px solid #f6f6f6;box-shadow:inset 1px 1px 0 #d4d4d4;border-radius:2px;background:#e4e4e4"></div>
<div style="position:absolute;left:278px;top:262px;width:243px;height:101.5px;background:#fff;border:1px solid #3a3a3a;border-width:2px 2px 2px 1px;border-bottom-color:#555"></div>
<div style="position:absolute;left:279px;top:264px;width:231px;height:25px;background:linear-gradient(#fdfdfd,#f0f0f0)"></div>
<div style="position:absolute;left:279px;top:264px;width:26px;height:88px;background:linear-gradient(90deg,#eee,#e2e2e2)"></div>
<div style="position:absolute;left:305px;top:264px;width:1px;height:88px;background:#aaa"></div>
<div style="position:absolute;left:387px;top:264px;width:1px;height:88px;background:#aaa"></div>
<div style="position:absolute;left:468px;top:264px;width:1px;height:88px;background:#aaa"></div>
<div style="position:absolute;left:279px;top:289px;width:231px;height:1px;background:#999"></div>
<div style="position:absolute;left:279px;top:305.5px;width:231px;height:1px;background:#999"></div>
<div style="position:absolute;left:279px;top:322px;width:231px;height:1px;background:#999"></div>
<div style="position:absolute;left:279px;top:338px;width:231px;height:1px;background:#999"></div>
<div style="position:absolute;left:306px;top:288px;width:204px;height:2px;background:#888"></div>
<div class="t" style="left:310.8px;top:272.6px;font-size:9.1px;color:#111;font-weight:normal;font-family:'Liberation Sans',sans-serif;">Código</div>
<div class="t" style="left:392.0px;top:272.6px;font-size:9.1px;color:#111;font-weight:normal;font-family:'Liberation Sans',sans-serif;">Serie</div>
<div class="t" style="left:474.0px;top:272.6px;font-size:9.1px;color:#111;font-weight:normal;font-family:'Liberation Sans',sans-serif;">Textura</div>
<div class="t" style="left:308.0px;top:293.6px;font-size:8.9px;color:#111;font-weight:normal;font-family:'Liberation Sans',sans-serif;">261</div>
<div class="t" style="left:389.0px;top:293.6px;font-size:8.9px;color:#111;font-weight:normal;font-family:'Liberation Sans',sans-serif;letter-spacing:-0.2px">Hoffmeister Schl...</div>
<div class="t" style="left:470.6px;top:293.6px;font-size:8.9px;color:#111;font-weight:normal;font-family:'Liberation Sans',sans-serif;letter-spacing:-0.3px">silt loam</div>
<div class="t" style="left:308.0px;top:309.9px;font-size:8.9px;color:#111;font-weight:normal;font-family:'Liberation Sans',sans-serif;">262</div>
<div class="t" style="left:389.0px;top:309.9px;font-size:8.9px;color:#111;font-weight:normal;font-family:'Liberation Sans',sans-serif;letter-spacing:-0.2px">Grenoble 1</div>
<div class="t" style="left:470.6px;top:309.9px;font-size:8.9px;color:#111;font-weight:normal;font-family:'Liberation Sans',sans-serif;letter-spacing:-0.3px">sand</div>
<div class="t" style="left:308.0px;top:326.4px;font-size:8.9px;color:#111;font-weight:normal;font-family:'Liberation Sans',sans-serif;">263</div>
<div class="t" style="left:389.0px;top:326.4px;font-size:8.9px;color:#111;font-weight:normal;font-family:'Liberation Sans',sans-serif;letter-spacing:-0.2px">Grenoble 2</div>
<div class="t" style="left:470.6px;top:326.4px;font-size:8.9px;color:#111;font-weight:normal;font-family:'Liberation Sans',sans-serif;letter-spacing:-0.3px">sand</div>
<div class="t" style="left:308.0px;top:342.8px;font-size:8.9px;color:#111;font-weight:normal;font-family:'Liberation Sans',sans-serif;">264</div>
<div class="t" style="left:389.0px;top:342.8px;font-size:8.9px;color:#111;font-weight:normal;font-family:'Liberation Sans',sans-serif;letter-spacing:-0.2px">Grenoble 3</div>
<div class="t" style="left:470.6px;top:342.8px;font-size:8.9px;color:#111;font-weight:normal;font-family:'Liberation Sans',sans-serif;letter-spacing:-0.3px">sand</div>
<div style="position:absolute;left:279px;top:351px;width:240px;height:9px;background:#e8e8e8;border-top:1px solid #ccc"></div>
<div style="position:absolute;left:510px;top:264px;width:10px;height:88px;background:#ececec;border-left:1px solid #ddd"></div>
<div class="t" style="left:512.0px;top:265.0px;font-size:6px;color:#777;font-weight:normal;font-family:'Liberation Sans',sans-serif;">▲</div>
<div class="t" style="left:512.0px;top:343.0px;font-size:6px;color:#777;font-weight:normal;font-family:'Liberation Sans',sans-serif;">▼</div>
<div class="t" style="left:281.0px;top:353.0px;font-size:6px;color:#777;font-weight:normal;font-family:'Liberation Sans',sans-serif;">◀</div>
<div class="t" style="left:502.0px;top:353.0px;font-size:6px;color:#777;font-weight:normal;font-family:'Liberation Sans',sans-serif;">▶</div>
<div class="t" style="left:539.5px;top:263.6px;font-size:8.8px;color:#888;font-weight:normal;font-family:'Liberation Sans',sans-serif;">Suelo:</div>
<div style="position:absolute;left:539px;top:275px;width:116px;height:15px;background:#e4e4e4;border:1px solid #8e8e8e;box-shadow:inset -1px -1px 0 #f0f0f0"></div>
<div class="t" style="left:539.5px;top:300.6px;font-size:8.8px;color:#888;font-weight:normal;font-family:'Liberation Sans',sans-serif;">Textura:</div>
<div style="position:absolute;left:539px;top:312px;width:116px;height:15px;background:#e4e4e4;border:1px solid #8e8e8e;box-shadow:inset -1px -1px 0 #f0f0f0"></div>
<div class="t" style="left:539.5px;top:337.3px;font-size:8.8px;color:#888;font-weight:normal;font-family:'Liberation Sans',sans-serif;">Ks:</div>
<div style="position:absolute;left:539px;top:348px;width:75px;height:15px;background:#e4e4e4;border:1px solid #8e8e8e;box-shadow:inset -1px -1px 0 #f0f0f0"></div>
<div class="t" style="left:619.0px;top:351.6px;font-size:8.8px;color:#888;font-weight:normal;font-family:'Liberation Sans',sans-serif;">m/d</div>
<div style="position:absolute;left:540px;top:386px;width:54px;height:18px;background:linear-gradient(#f4f4f4,#e4e4e4 45%,#d4d4d4 55%,#cacaca);border:1px solid #5a5a5a;border-radius:2px"></div>
<div class="t" style="left:544.5px;top:392.2px;font-size:9.1px;color:#111;font-weight:normal;font-family:'Liberation Sans',sans-serif;">Aceptar</div>
<svg style="position:absolute;left:581.5px;top:390.5px" width="11" height="11"><circle cx="5.5" cy="5.5" r="4.8" fill="#8c8c8c" stroke="#777" stroke-width="0.8"/><path d="M3 5.6 L4.9 7.4 L8 3.8" fill="none" stroke="#e8e8e8" stroke-width="1.4"/></svg>
<div style="position:absolute;left:614px;top:386px;width:55px;height:18px;background:linear-gradient(#f4f4f4,#e4e4e4 45%,#d4d4d4 55%,#cacaca);border:1px solid #5a5a5a;border-radius:2px"></div>
<div class="t" style="left:618.5px;top:392.2px;font-size:9.1px;color:#111;font-weight:normal;font-family:'Liberation Sans',sans-serif;transform:scaleX(1.022);transform-origin:0 0;">Cancelar</div>
<svg style="position:absolute;left:656.5px;top:391px" width="10" height="10"><path d="M3 0.2 H7 L9.8 3 V7 L7 9.8 H3 L0.2 7 V3Z" fill="#1e1e1e"/><path d="M3 3 L7 7 M7 3 L3 7" stroke="#fff" stroke-width="1.6"/></svg>
<svg style="position:absolute;left:674px;top:411px" width="7" height="7"><g fill="#999"><rect x="5" y="1" width="1" height="1"/><rect x="3" y="3" width="1" height="1"/><rect x="5" y="3" width="1" height="1"/><rect x="1" y="5" width="1" height="1"/><rect x="3" y="5" width="1" height="1"/><rect x="5" y="5" width="1" height="1"/></g></svg>
<div class="t" style="left:3.8px;top:549.4px;font-size:18.8px;color:#151515;font-weight:bold;font-family:'Liberation Serif',sans-serif;transform:scaleX(1.130);transform-origin:0 0;-webkit-text-stroke:0">Figura 4. Ingreso de parámetros del suelo: a) directa; o b) base de datos.</div>
<div class="t" style="left:3.8px;top:575.9px;font-size:18.8px;color:#151515;font-weight:bold;font-family:'Liberation Serif',sans-serif;transform:scaleX(1.122);transform-origin:0 0;-webkit-text-stroke:0">Figure 4. Entry of soil parameters: a) direct; or b) database.</div>
</body></html>
